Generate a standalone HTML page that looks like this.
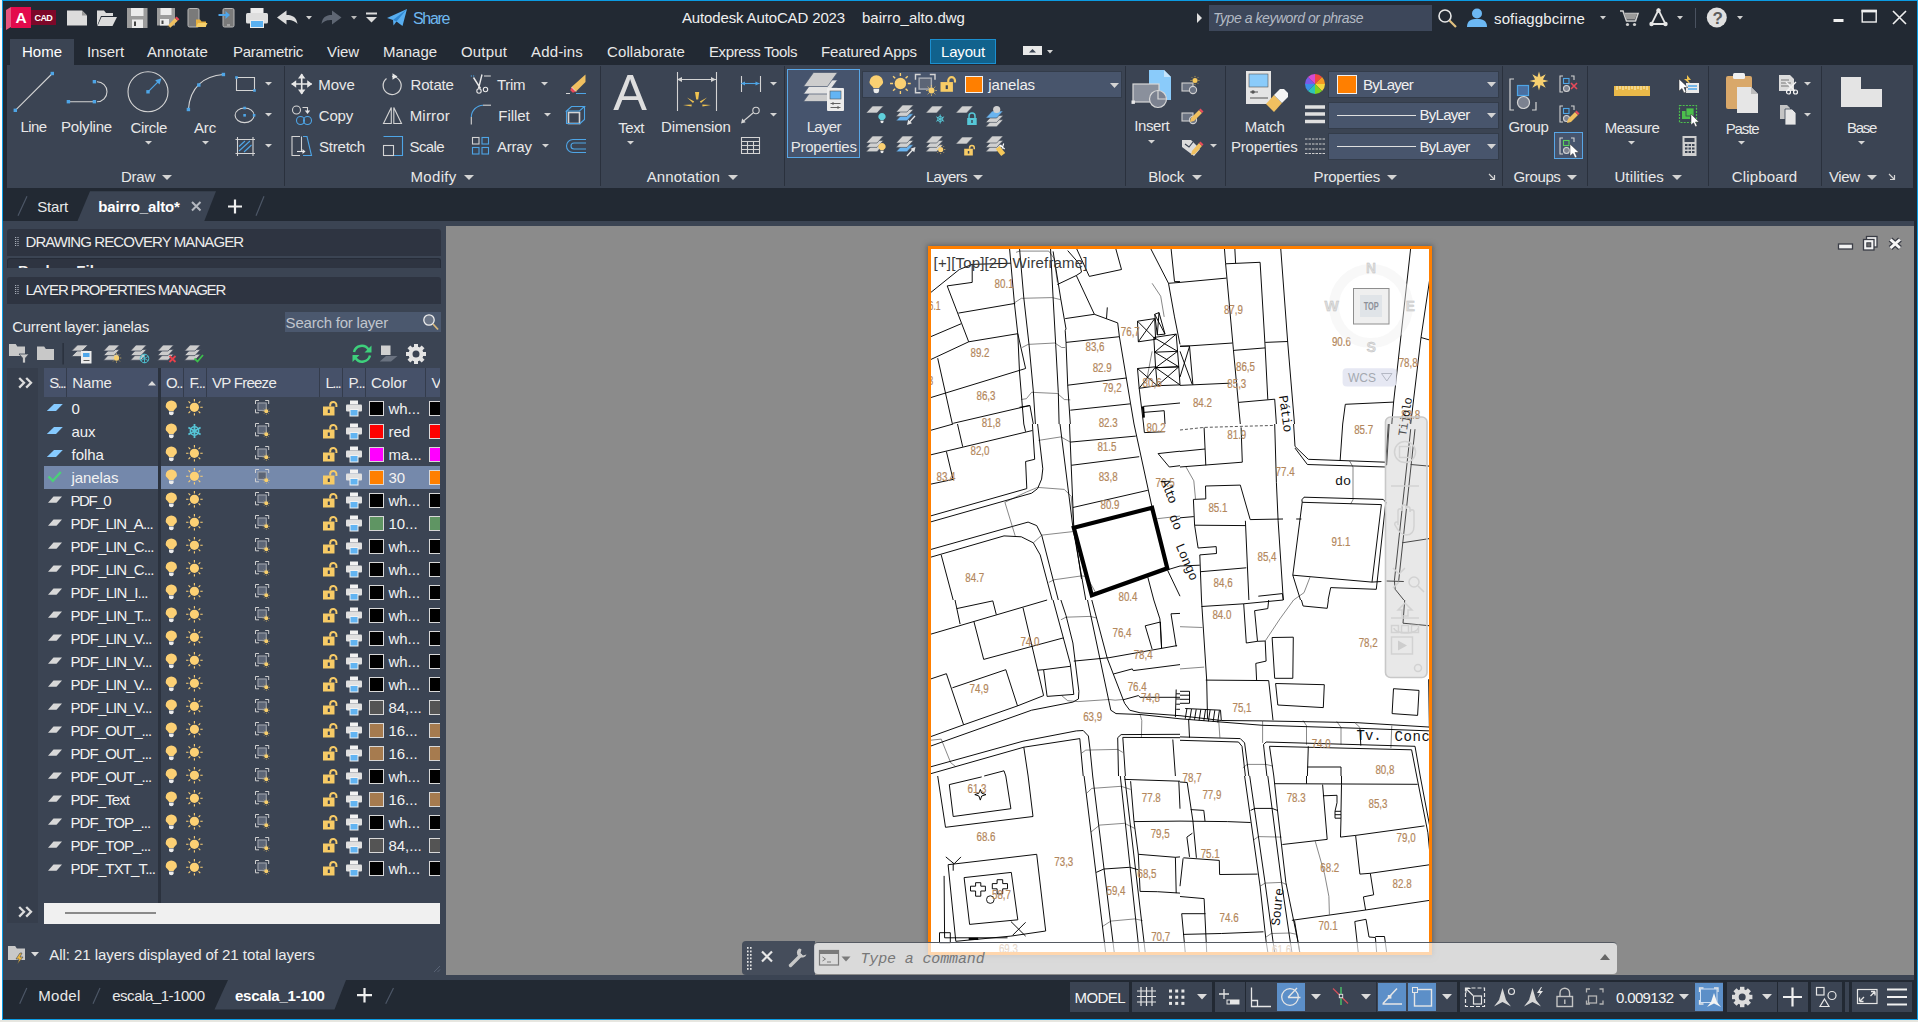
<!DOCTYPE html>
<html><head><meta charset="utf-8"><title>Autodesk AutoCAD 2023 - bairro_alto.dwg</title>
<style>html,body{margin:0;padding:0}body{width:1919px;height:1022px;overflow:hidden;background:#fff;font-family:"Liberation Sans",sans-serif;position:relative}
body>div,body>span,body>svg{position:absolute}
.t{white-space:pre;line-height:normal}
svg{overflow:visible}
#map{overflow:hidden}</style></head><body>
<div style="left:0px;top:0px;width:2px;height:28px;background:#f3f3f3;"></div>
<div style="left:0px;top:28px;width:2px;height:994px;background:#ffffff;"></div>
<div style="left:0px;top:1020px;width:1919px;height:2px;background:#e6e6e0;"></div>
<div style="left:1918px;top:0px;width:1px;height:1022px;background:#fff;"></div>
<div style="left:2px;top:0px;width:1916px;height:1020px;background:#222933;box-sizing:border-box;border:1px solid #0b9be3"></div>
<svg style="left:6px;top:7px;" width="36" height="20" viewBox="0 0 36 20"><path d="M0 3L5 0V20L0 23Z" fill="#e8557f"/><rect x="5" y="0" width="20" height="21" fill="#e30b4c"/><rect x="25" y="3" width="25" height="15" fill="#7d0829"/></svg>
<span class="t" style="left:15.4px;top:9px;font-size:15.5px;color:#fff;font-weight:bold;">A</span>
<span class="t" style="left:34.6px;top:13px;font-size:9px;color:#fff;letter-spacing:-0.633px;font-weight:bold;">CAD</span>
<span class="t" style="left:413.0px;top:10px;font-size:16px;color:#6fb8f0;letter-spacing:-1.344px;">Share</span>
<span class="t" style="left:682.0px;top:9px;font-size:15px;color:#f0f0f0;letter-spacing:-0.141px;">Autodesk AutoCAD 2023</span>
<span class="t" style="left:862.0px;top:9px;font-size:15px;color:#f0f0f0;letter-spacing:0.028px;">bairro_alto.dwg</span>
<div style="left:1209px;top:5px;width:223px;height:26px;background:#3d475a;"></div>
<span class="t" style="left:1213.0px;top:10px;font-size:14px;color:#b4bac4;letter-spacing:-0.448px;font-style:italic;">Type a keyword or phrase</span>
<svg style="left:1197px;top:13px;" width="5" height="10" viewBox="0 0 5 10"><path d="M0 0L5 5L0 10Z" fill="#e0e0e0"/></svg>
<span class="t" style="left:1494.0px;top:10px;font-size:15px;color:#f0f0f0;letter-spacing:0.136px;">sofiaggbcirne</span>
<svg style="left:60px;top:0px;" width="400" height="36" viewBox="0 0 400 36"><path d="M7 10.5H22L27 15.5V25.5H7Z" fill="#dcdcdc"/><path d="M22 10.5V15.5H27Z" fill="#9a9a9a"/><path d="M37 26V10.5H44L46 13H53V16H41L37 26Z" fill="#dcdcdc"/><path d="M41.5 17H57L52.5 26H37.5Z" fill="#dcdcdc"/><rect x="67" y="8" width="20.5" height="20" fill="#9c9c9c"/><rect x="71" y="8" width="12.5" height="8" fill="#ececec"/><rect x="72" y="19.5" width="11" height="8.5" fill="#ececec"/><rect x="74" y="21.5" width="2" height="4.5" fill="#444"/><rect x="97" y="8" width="18" height="17.5" fill="#9c9c9c"/><rect x="100.5" y="8" width="11" height="7" fill="#ececec"/><rect x="100" y="19" width="9" height="6.5" fill="#ececec"/><rect x="101.5" y="20.5" width="2" height="3.5" fill="#444"/><path d="M108 25.5l7-7.5l2.8 2.8l-7.5 7z" fill="#f0c060"/><path d="M115 18l1.6-1.6l2.8 2.8l-1.6 1.6z" fill="#e84a5a"/><path d="M107 28.3l1-2.8l1.8 1.8z" fill="#444"/><rect x="128" y="8.5" width="11" height="18.5" rx="1.5" fill="#7a7a7a" stroke="#b8b8b8" stroke-width="1"/><path d="M136 27V19.5H140L141.5 21.5H146V27Z" fill="#e6b040"/><path d="M138 23H147.5L145.5 27H136Z" fill="#f5cf6a"/><rect x="163" y="8.5" width="11" height="18.5" rx="1.5" fill="#7a7a7a" stroke="#b8b8b8" stroke-width="1"/><path d="M158.5 15h8.5" stroke="#4fa6ea" stroke-width="2"/><path d="M165.5 11l4.5 4l-4.5 4z" fill="#4fa6ea"/><rect x="167" y="24.5" width="3" height="1" fill="#ccc"/><rect x="190.5" y="8" width="13" height="6" fill="#ececec"/><rect x="186" y="13" width="22" height="10.5" rx="1.5" fill="#dedede"/><rect x="190.5" y="20.5" width="13" height="7" fill="#5ab0f0" stroke="#ececec" stroke-width="1"/><path d="M217 17.5L226.5 10.5V15C233 15 236.5 17.5 237.5 24C234.5 20.5 231 20 226.5 20V24.5Z" fill="#dcdcdc"/><path d="M281.5 17.5L272 10.5V15C265.5 15 262.5 17.5 261.5 24C264.5 20.5 267.5 20 272 20V24.5Z" fill="#5e6673"/><rect x="306" y="12.5" width="11" height="2" fill="#dcdcdc"/><path d="M306 17H317L311.5 22.5Z" fill="#dcdcdc"/><path d="M327 18L347 9L342.5 26L336.5 21.5L333.5 25.5L333 20Z" fill="#58aef0"/><path d="M333 20L347 9L336.5 21.5" fill="#2f86d0"/></svg>
<svg style="left:306.0px;top:15.5px;" width="6" height="3.5" viewBox="0 0 6 3.5"><path d="M0 0H6L3.0 3.5Z" fill="#d0d0d0"/></svg>
<svg style="left:351.0px;top:15.5px;" width="6" height="3.5" viewBox="0 0 6 3.5"><path d="M0 0H6L3.0 3.5Z" fill="#b8b8b8"/></svg>
<svg style="left:1430px;top:0px;" width="480" height="36" viewBox="0 0 480 36"><circle cx="15" cy="16" r="6" fill="none" stroke="#e6e6e6" stroke-width="1.6"/><path d="M19.5 20.5L26 27" stroke="#e0c080" stroke-width="2.2"/><circle cx="47" cy="13.5" r="5" fill="#6cb8f4"/><path d="M37 27C37 20.5 41.5 19 47 19S57 20.5 57 27Z" fill="#6cb8f4"/><path d="M190 11h3l3.5 10h9l2.5-7.5h-13" fill="none" stroke="#cfcfcf" stroke-width="1.6"/><circle cx="197.5" cy="24.5" r="1.6" fill="#cfcfcf"/><circle cx="204.500" cy="24.5" r="1.6" fill="#cfcfcf"/><path d="M194 13.5h13l-2 6h-8.500z" fill="#9a9a9a"/><path d="M228.500 10L221.5 24H235.500Z" fill="none" stroke="#e6e6e6" stroke-width="1.8"/><circle cx="228.500" cy="10.5" r="2.2" fill="#e6e6e6"/><circle cx="221.5" cy="24" r="2.200" fill="#e6e6e6"/><circle cx="235.500" cy="24" r="2.200" fill="#e6e6e6"/><rect x="265" y="8" width="1" height="20" fill="#4a5260"/><circle cx="286.800" cy="17.5" r="10" fill="#e0e0e0"/><rect x="403.500" y="19" width="10" height="3" fill="#f0f0f0"/><rect x="432.200" y="10.500" width="14" height="11.500" fill="none" stroke="#f0f0f0" stroke-width="1.4"/><rect x="431.500" y="9.800" width="15.400" height="2.600" fill="#f0f0f0"/><path d="M463 11L476 24M476 11L463 24" stroke="#f0f0f0" stroke-width="1.6"/></svg>
<span class="t" style="left:1712.5px;top:9px;font-size:17px;color:#5c5c5c;font-weight:bold;">?</span>
<svg style="left:1599.8px;top:15.5px;" width="6" height="3.5" viewBox="0 0 6 3.5"><path d="M0 0H6L3.0 3.5Z" fill="#d0d0d0"/></svg>
<svg style="left:1676.5px;top:15.5px;" width="6" height="3.5" viewBox="0 0 6 3.5"><path d="M0 0H6L3.0 3.5Z" fill="#d0d0d0"/></svg>
<svg style="left:1736.5px;top:15.5px;" width="6" height="3.5" viewBox="0 0 6 3.5"><path d="M0 0H6L3.0 3.5Z" fill="#d0d0d0"/></svg>
<div style="left:10px;top:39px;width:64px;height:26px;background:#3b4453;"></div>
<span class="t" style="left:22.0px;top:43px;font-size:15px;color:#fff;letter-spacing:-0.004px;">Home</span>
<span class="t" style="left:87.0px;top:43px;font-size:15px;color:#e8e8e8;letter-spacing:-0.089px;">Insert</span>
<span class="t" style="left:147.0px;top:43px;font-size:15px;color:#e8e8e8;letter-spacing:0.117px;">Annotate</span>
<span class="t" style="left:233.0px;top:43px;font-size:15px;color:#e8e8e8;letter-spacing:-0.253px;">Parametric</span>
<span class="t" style="left:327.0px;top:43px;font-size:15px;color:#e8e8e8;letter-spacing:-0.059px;">View</span>
<span class="t" style="left:383.0px;top:43px;font-size:15px;color:#e8e8e8;letter-spacing:-0.036px;">Manage</span>
<span class="t" style="left:461.0px;top:43px;font-size:15px;color:#e8e8e8;letter-spacing:0.159px;">Output</span>
<span class="t" style="left:531.0px;top:43px;font-size:15px;color:#e8e8e8;letter-spacing:0.163px;">Add-ins</span>
<span class="t" style="left:607.0px;top:43px;font-size:15px;color:#e8e8e8;letter-spacing:0.116px;">Collaborate</span>
<span class="t" style="left:709.0px;top:43px;font-size:15px;color:#e8e8e8;letter-spacing:-0.393px;">Express Tools</span>
<span class="t" style="left:821.0px;top:43px;font-size:15px;color:#e8e8e8;letter-spacing:-0.121px;">Featured Apps</span>
<div style="left:930px;top:39px;width:66px;height:25px;background:#11628d;box-sizing:border-box;border:1px solid #1b8fd0"></div>
<span class="t" style="left:941.0px;top:43px;font-size:15px;color:#fff;letter-spacing:-0.174px;">Layout</span>
<svg style="left:1023px;top:46px;" width="20" height="10" viewBox="0 0 20 10"><rect width="19" height="9" fill="#e8e8e8"/><path d="M6 6.5L9.5 3L13 6.5Z" fill="#3b4453"/></svg>
<svg style="left:1046.5px;top:50px;" width="6" height="3.5" viewBox="0 0 6 3.5"><path d="M0 0H6L3.0 3.5Z" fill="#d4d4d4"/></svg>
<div style="left:7px;top:65px;width:1906px;height:123px;background:#3b4453;"></div>
<div style="left:284px;top:66px;width:1px;height:120px;background:#2a313d;"></div>
<div style="left:600px;top:66px;width:1px;height:120px;background:#2a313d;"></div>
<div style="left:784px;top:66px;width:1px;height:120px;background:#2a313d;"></div>
<div style="left:1125px;top:66px;width:1px;height:120px;background:#2a313d;"></div>
<div style="left:1225px;top:66px;width:1px;height:120px;background:#2a313d;"></div>
<div style="left:1502px;top:66px;width:1px;height:120px;background:#2a313d;"></div>
<div style="left:1587px;top:66px;width:1px;height:120px;background:#2a313d;"></div>
<div style="left:1708px;top:66px;width:1px;height:120px;background:#2a313d;"></div>
<div style="left:1821px;top:66px;width:1px;height:120px;background:#2a313d;"></div>
<svg style="left:0px;top:65px;" width="284" height="100" viewBox="0 0 284 100"><g fill="none" stroke="#d4d4d4" stroke-width="1.1"><path d="M15.3 45.3L52.3 8.5"/><path d="M68.4 36.7H94.4M97 16.7A10 10 0 0 1 97 36.7"/><circle cx="148" cy="26.8" r="20"/><path d="M188.4 44.5C190 22 204 11 223.4 9.5"/><path d="M236.500 12.500H254.500V25.500H236.500Z"/><ellipse cx="244.6" cy="50.3" rx="9.5" ry="7.3"/><path d="M237.5 72V91M253 72V91M235.5 74.5H255M235.5 88.5H255"/></g><path d="M148 26.8L159 15.8" stroke="#4ea5e6" stroke-width="1.2"/><path d="M161.5 13.2L155.2 15.2L159.5 19.5Z" fill="#4ea5e6"/><path d="M239 86L250 76M239 81.5L245 76M244 87L251.5 80" stroke="#4ea5e6" stroke-width="1.1"/><rect x="13.6" y="43.6" width="3.4" height="3.4" fill="#4ea5e6"/><rect x="50.6" y="6.8" width="3.4" height="3.4" fill="#4ea5e6"/><rect x="66.7" y="35.0" width="3.4" height="3.4" fill="#4ea5e6"/><rect x="92.7" y="35.0" width="3.4" height="3.4" fill="#4ea5e6"/><rect x="92.7" y="15.0" width="3.4" height="3.4" fill="#4ea5e6"/><rect x="146.3" y="25.1" width="3.4" height="3.4" fill="#4ea5e6"/><rect x="186.7" y="42.8" width="3.4" height="3.4" fill="#4ea5e6"/><rect x="197.1" y="18.3" width="3.4" height="3.4" fill="#4ea5e6"/><rect x="221.7" y="7.8" width="3.4" height="3.4" fill="#4ea5e6"/><rect x="235.2" y="11.2" width="2.6" height="2.6" fill="#4ea5e6"/><rect x="253.2" y="24.2" width="2.6" height="2.6" fill="#4ea5e6"/><rect x="243.3" y="41.7" width="2.6" height="2.6" fill="#4ea5e6"/><rect x="243.3" y="49.0" width="2.6" height="2.6" fill="#4ea5e6"/><rect x="252.8" y="49.0" width="2.6" height="2.6" fill="#4ea5e6"/></svg>
<span class="t" style="left:20.4px;top:118px;font-size:15px;color:#e8e8e8;letter-spacing:-0.515px;">Line</span>
<span class="t" style="left:61.0px;top:118px;font-size:15px;color:#e8e8e8;letter-spacing:-0.189px;">Polyline</span>
<span class="t" style="left:130.4px;top:119px;font-size:15px;color:#e8e8e8;letter-spacing:-0.288px;">Circle</span>
<span class="t" style="left:194.0px;top:119px;font-size:15px;color:#e8e8e8;letter-spacing:-0.167px;">Arc</span>
<svg style="left:144.5px;top:141px;" width="7" height="3.5" viewBox="0 0 7 3.5"><path d="M0 0H7L3.5 3.5Z" fill="#d4d4d4"/></svg>
<svg style="left:201.5px;top:141px;" width="7" height="3.5" viewBox="0 0 7 3.5"><path d="M0 0H7L3.5 3.5Z" fill="#d4d4d4"/></svg>
<svg style="left:264.5px;top:82px;" width="7" height="3.5" viewBox="0 0 7 3.5"><path d="M0 0H7L3.5 3.5Z" fill="#d4d4d4"/></svg>
<svg style="left:264.5px;top:113px;" width="7" height="3.5" viewBox="0 0 7 3.5"><path d="M0 0H7L3.5 3.5Z" fill="#d4d4d4"/></svg>
<svg style="left:264.5px;top:144px;" width="7" height="3.5" viewBox="0 0 7 3.5"><path d="M0 0H7L3.5 3.5Z" fill="#d4d4d4"/></svg>
<span class="t" style="left:121.0px;top:168px;font-size:15px;color:#e8e8e8;letter-spacing:-0.250px;">Draw</span>
<svg style="left:162.0px;top:175px;" width="10" height="5" viewBox="0 0 10 5"><path d="M0 0H10L5.0 5Z" fill="#d4d4d4"/></svg>
<svg style="left:280px;top:60px;" width="320" height="100" viewBox="0 0 320 100"><path d="M21.7 14v20M11.7 24h20" stroke="#e8e8e8" stroke-width="1.6" fill="none"/><path d="M21.7 13.5l-3.7 5h7.4zM21.7 34.5l-3.7-5h7.4zM11.2 24l5-3.7v7.4zM32.2 24l-5-3.7v7.4z" fill="#e8e8e8"/><g fill="none" stroke-width="1.1"><circle cx="16.5" cy="50" r="4" stroke="#d4d4d4"/><circle cx="20.5" cy="60.5" r="4" stroke="#4ea5e6"/><circle cx="27.5" cy="60.5" r="4" stroke="#4ea5e6"/><path d="M22.5 47.5h5v3.5" stroke="#d4d4d4"/></g><path d="M24.8 50.5h5.4l-2.7 3.5z" fill="#e8e8e8"/><g fill="none" stroke-width="1.1"><path d="M20 76.5H12V95.5H20" stroke="#d4d4d4"/><path d="M21.5 76.5V92" stroke="#d4d4d4"/><path d="M23 76.5H27L31.5 95.5H23" stroke="#4ea5e6"/><path d="M17 91.5h6" stroke="#e8e8e8"/></g><path d="M22.5 89l3 2.5l-3 2.5z" fill="#e8e8e8"/><path d="M112 16.5A9 9 0 1 1 106.5 18.5" fill="none" stroke="#d4d4d4" stroke-width="1.2"/><path d="M112.5 13.2l5 3.4l-5 3.2z" fill="#e8e8e8"/><g fill="none" stroke-width="1.1"><path d="M111.3 47.5V63.5H103.5Z" stroke="#d4d4d4"/><path d="M113.8 47.5V63.5H121.5Z" stroke="#d4d4d4"/></g><g fill="none" stroke-width="1.1"><path d="M103.5 76.5H122.5V95.5H114" stroke="#4ea5e6"/><rect x="103.5" y="85.5" width="10" height="10" stroke="#d4d4d4"/></g><g fill="none" stroke-width="1.1"><path d="M190.8 16h4.5" stroke="#4ea5e6" stroke-dasharray="1.2 1"/><path d="M204 16h6.8" stroke="#d4d4d4"/><path d="M193.5 17.5l7 11M202 14.5l-3.5 14" stroke="#e8e8e8" stroke-width="1.4"/><circle cx="199" cy="31" r="2.2" stroke="#e8e8e8"/><circle cx="205.5" cy="29.5" r="2.2" stroke="#e8e8e8"/></g><path d="M191.3 64.5V57" fill="none" stroke="#d4d4d4" stroke-width="1.1"/><path d="M191.3 57A12 12 0 0 1 203 45.2" fill="none" stroke="#4ea5e6" stroke-width="1.1"/><path d="M203 45.2H211" fill="none" stroke="#d4d4d4" stroke-width="1.1"/><g fill="none" stroke-width="1.1"><rect x="192.5" y="77.5" width="6.5" height="6.5" stroke="#d4d4d4"/><rect x="202" y="77.5" width="6.5" height="6.5" stroke="#4ea5e6"/><rect x="192.5" y="87.5" width="6.5" height="6.5" stroke="#4ea5e6"/><rect x="202" y="87.5" width="6.5" height="6.5" stroke="#4ea5e6"/></g><path d="M305.5 14.5V22L296 31.5L291.5 27Z" fill="#f0c060"/><path d="M296 31.5l-3.2 1.2l-2.5-2.5l1.2-3.2z" fill="#e84a5a"/><path d="M291.5 27l4.5 4.5" stroke="#fff" stroke-width="0.8"/><path d="M286 33.5h4" stroke="#d4d4d4" stroke-width="1"/><path d="M296 33.5h10" stroke="#4ea5e6" stroke-width="1"/><g fill="none" stroke-width="1.1"><rect x="288.5" y="52.5" width="11" height="11" stroke="#d4d4d4" stroke-width="1.6"/><path d="M286.5 51l5-4.5h13l-5 4.5zM304.5 46.5v13l-5 4.5" stroke="#4ea5e6"/><path d="M286.5 51v12.5h13" stroke="#4ea5e6"/></g><g fill="none" stroke="#4ea5e6" stroke-width="1.1"><path d="M306 79.5H293A6.5 6.5 0 0 0 293 92.5H306"/><path d="M306 83H294A3 3 0 0 0 294 89H306"/></g></svg>
<span class="t" style="left:318.3px;top:76px;font-size:15px;color:#e8e8e8;letter-spacing:-0.072px;">Move</span>
<span class="t" style="left:318.8px;top:107px;font-size:15px;color:#e8e8e8;letter-spacing:-0.204px;">Copy</span>
<span class="t" style="left:319.0px;top:138px;font-size:15px;color:#e8e8e8;letter-spacing:-0.219px;">Stretch</span>
<span class="t" style="left:410.5px;top:76px;font-size:15px;color:#e8e8e8;letter-spacing:-0.151px;">Rotate</span>
<span class="t" style="left:409.7px;top:107px;font-size:15px;color:#e8e8e8;letter-spacing:0.188px;">Mirror</span>
<span class="t" style="left:409.5px;top:138px;font-size:15px;color:#e8e8e8;letter-spacing:-0.603px;">Scale</span>
<span class="t" style="left:497.0px;top:76px;font-size:15px;color:#e8e8e8;letter-spacing:-0.280px;">Trim</span>
<span class="t" style="left:498.3px;top:107px;font-size:15px;color:#e8e8e8;letter-spacing:-0.076px;">Fillet</span>
<span class="t" style="left:497.0px;top:138px;font-size:15px;color:#e8e8e8;letter-spacing:-0.229px;">Array</span>
<svg style="left:540.5px;top:82px;" width="7" height="3.5" viewBox="0 0 7 3.5"><path d="M0 0H7L3.5 3.5Z" fill="#d4d4d4"/></svg>
<svg style="left:544.3px;top:113px;" width="7" height="3.5" viewBox="0 0 7 3.5"><path d="M0 0H7L3.5 3.5Z" fill="#d4d4d4"/></svg>
<svg style="left:542.3px;top:144px;" width="7" height="3.5" viewBox="0 0 7 3.5"><path d="M0 0H7L3.5 3.5Z" fill="#d4d4d4"/></svg>
<span class="t" style="left:410.5px;top:168px;font-size:15px;color:#e8e8e8;letter-spacing:0.335px;">Modify</span>
<svg style="left:464.0px;top:175px;" width="10" height="5" viewBox="0 0 10 5"><path d="M0 0H10L5.0 5Z" fill="#d4d4d4"/></svg>
<span class="t" style="left:613.2px;top:63px;font-size:50.5px;color:#dedede;">A</span>
<span class="t" style="left:618.3px;top:119px;font-size:15px;color:#e8e8e8;letter-spacing:-0.454px;">Text</span>
<svg style="left:626.5px;top:141px;" width="7" height="3.5" viewBox="0 0 7 3.5"><path d="M0 0H7L3.5 3.5Z" fill="#d4d4d4"/></svg>
<svg style="left:676px;top:71px;" width="42" height="42" viewBox="0 0 42 42"><g fill="none" stroke="#d4d4d4" stroke-width="1.1"><path d="M1.500 1V40M40.500 1V40M1.500 8.500H40.500"/></g><path d="M1 8.5l5-2.5v5zM40 8.5l-5-2.5v5z" fill="#d4d4d4"/><path d="M19 21l1.2 7.5h2L23.2 21zM11 26.5l6 5.5l1.2-1.4zM31 26.5l-6 5.5l-1.2-1.4zM7 34l8.5 1.5l0.2-2zM35 34l-8.5 1.5l-0.2-2z" fill="#f0c350"/></svg>
<span class="t" style="left:661.0px;top:118px;font-size:15px;color:#e8e8e8;letter-spacing:-0.129px;">Dimension</span>
<svg style="left:740px;top:74px;" width="22" height="82" viewBox="0 0 22 82"><g fill="none" stroke-width="1.1"><path d="M1.500 2V18M20.500 2V18" stroke="#d4d4d4"/><path d="M1 9.5H19.5" stroke="#4ea5e6"/><path d="M1 9.5l4-2v4zM19.5 9.5l-4-2v4z" fill="#4ea5e6" stroke="none"/><circle cx="16" cy="36.5" r="3.2" stroke="#d4d4d4"/><path d="M13 39L3 47.5" stroke="#d4d4d4"/><path d="M1 49.5l1.2-5l3.5 3.8z" fill="#d4d4d4" stroke="none"/><path d="M1.5 63.5H19.5V79.5H1.5ZM1.5 67.5H19.5M1.5 71.5H19.5M1.5 75.5H19.5M7.5 67.5V79.5M13.5 67.5V79.5" stroke="#d4d4d4"/></g></svg>
<svg style="left:769.5px;top:82px;" width="7" height="3.5" viewBox="0 0 7 3.5"><path d="M0 0H7L3.5 3.5Z" fill="#d4d4d4"/></svg>
<svg style="left:769.5px;top:113px;" width="7" height="3.5" viewBox="0 0 7 3.5"><path d="M0 0H7L3.5 3.5Z" fill="#d4d4d4"/></svg>
<span class="t" style="left:646.7px;top:168px;font-size:15px;color:#e8e8e8;letter-spacing:0.157px;">Annotation</span>
<svg style="left:727.7px;top:175px;" width="10" height="5" viewBox="0 0 10 5"><path d="M0 0H10L5.0 5Z" fill="#d4d4d4"/></svg>
<div style="left:787px;top:69px;width:73px;height:89px;background:#46546d;box-sizing:border-box;border:1px solid #58a6e6"></div>
<svg style="left:803px;top:71px;" width="44" height="42" viewBox="0 0 44 42"><path d="M10.5 16.5h24.0l-10.0 14.0h-24.0z" fill="#cdcdcd" stroke="#46546d" stroke-width="0.7"/><path d="M10.5 9.0h24.0l-10.0 14.0h-24.0z" fill="#e2e2e2" stroke="#46546d" stroke-width="0.7"/><path d="M10.5 1.5h24.0l-10.0 14.0h-24.0z" fill="#cdcdcd" stroke="#46546d" stroke-width="0.7"/><rect x="24" y="17" width="17" height="23" rx="1" fill="#ececec"/><rect x="27" y="20" width="11" height="8" fill="#62b4f4" stroke="#555" stroke-width="0.6"/><path d="M27.500 32.500h10M27.500 36.500h10" stroke="#555" stroke-width="0.9"/><path d="M30 31v3M35 35v3" stroke="#555" stroke-width="0.9"/></svg>
<span class="t" style="left:806.7px;top:118px;font-size:15px;color:#e8e8e8;letter-spacing:-0.706px;">Layer</span>
<span class="t" style="left:790.7px;top:138px;font-size:15px;color:#e8e8e8;letter-spacing:-0.237px;">Properties</span>
<div style="left:862px;top:71px;width:260px;height:27px;background:#48556c;box-sizing:border-box;border:1px solid #333c4a"></div>
<svg style="left:862px;top:71px;" width="260" height="27" viewBox="0 0 260 27"><path d="M7.47 10.97a6.83 6.83 0 1 1 13.66 0c0 3.17 -3.90 4.15 -3.90 6.10h-5.86c0 -1.95 -3.90 -2.93 -3.90 -6.10z" fill="#fad072"/><path d="M11.49 17.68h5.61v2.20a2.81 2.44 0 0 1 -5.61 0z" fill="#ececec"/><circle cx="38.4" cy="12.5" r="5.75" fill="#fad072"/><path d="M45.77 12.50L48.77 12.50M43.61 17.71L45.74 19.84M38.40 19.88L38.40 22.88M33.19 17.71L31.06 19.84M31.02 12.50L28.02 12.50M33.19 7.29L31.06 5.16M38.40 5.12L38.40 2.12M43.61 7.29L45.74 5.16" stroke="#fad072" stroke-width="1.38" fill="none"/><g fill="none" stroke="#d4d4d4" stroke-width="1.43"><path d="M53.5 8.7V3.5H58.7M67.8 3.5H73.0V8.7M53.5 16.5V21.7H58.7"/><rect x="57.14" y="7.14" width="12.22" height="10.920000000000002" fill="#5c6576" stroke="#a8acb4"/></g><circle cx="69.49000000000001" cy="19.490000000000002" r="2.99" fill="#f8cf6c"/><path d="M73.33 19.49L74.89 19.49M72.20 22.20L73.30 23.30M69.49 23.33L69.49 24.89M66.78 22.20L65.68 23.30M65.66 19.49L64.10 19.49M66.78 16.78L65.68 15.68M69.49 15.66L69.49 14.10M72.20 16.78L73.30 15.68" stroke="#f8cf6c" stroke-width="0.72" fill="none"/><rect x="78.5" y="11.06" width="12.420000000000002" height="9.72" fill="#f8cc66"/><path d="M86.276 11.06V9.548A3.3480000000000003 3.3480000000000003 0 0 1 92.97200000000001 9.548V11.600000000000001" fill="none" stroke="#f8cc66" stroke-width="2.16"/><rect x="83.684" y="14.3" width="2.16" height="3.7800000000000002" fill="#3b4453"/><rect x="103.5" y="5.5" width="17" height="16" fill="#ff7f00" stroke="#f0f0f0" stroke-width="1"/></svg>
<span class="t" style="left:988.3px;top:76px;font-size:15px;color:#f0f0f0;letter-spacing:-0.119px;">janelas</span>
<svg style="left:1109.8px;top:82.5px;" width="9" height="5" viewBox="0 0 9 5"><path d="M0 0H9L4.5 5Z" fill="#d4d4d4"/></svg>
<svg style="left:862px;top:71px;" width="260" height="90" viewBox="0 0 260 90"><path d="M10.5 35h11l-6.5 7h-11z" fill="#d0d0d0" stroke="#3b4453" stroke-width="0.6"/><path d="M16.30 46.01a3.70 3.70 0 1 1 7.39 0c0 1.72 -2.11 2.24 -2.11 3.30h-3.17c0 -1.06 -2.11 -1.58 -2.11 -3.30z" fill="#5fd0dc"/><path d="M18.48 49.64h3.04v1.19a1.52 1.32 0 0 1 -3.04 0z" fill="#ececec"/><path d="M40.5 42.8h11l-6.5 7h-11z" fill="#6ab4f0" stroke="#3b4453" stroke-width="0.6"/><path d="M40.5 38.4h11l-6.5 7h-11z" fill="#d0d0d0" stroke="#3b4453" stroke-width="0.6"/><path d="M40.5 34h11l-6.5 7h-11z" fill="#d0d0d0" stroke="#3b4453" stroke-width="0.6"/><path d="M53 45l-5.500 6" stroke="#e4e4e4" stroke-width="1.300"/><path d="M45 54l1.200-5.200l3.800 3.400z" fill="#e4e4e4"/><path d="M70.20000000000005 35h11l-6.5 7h-11z" fill="#d0d0d0" stroke="#3b4453" stroke-width="0.6"/><path d="M78.20000000000005 43.5v9M74.30000000000004 45.8l7.800 4.500M82.10000000000005 45.8l-7.800 4.500" stroke="#56c8d8" stroke-width="1"/><circle cx="78.20000000000005" cy="48" r="2.600" fill="none" stroke="#56c8d8" stroke-width="0.900"/><path d="M100.20000000000005 35h11l-6.5 7h-11z" fill="#d0d0d0" stroke="#3b4453" stroke-width="0.6"/><rect x="105.20000000000005" y="47" width="9.500" height="7" fill="#56c8d8"/><path d="M107.00000000000004 47v-2a3 3 0 0 1 6 0v2" fill="none" stroke="#56c8d8" stroke-width="1.500"/><rect x="109.30000000000004" y="49" width="1.400" height="3" fill="#3b4453"/><path d="M130.20000000000005 48.8h11l-6.5 7h-11z" fill="#d0d0d0" stroke="#3b4453" stroke-width="0.6"/><path d="M130.20000000000005 44.4h11l-6.5 7h-11z" fill="#d0d0d0" stroke="#3b4453" stroke-width="0.6"/><path d="M130.20000000000005 40h11l-6.5 7h-11z" fill="#6ab4f0" stroke="#3b4453" stroke-width="0.6"/><circle cx="134.70000000000005" cy="38.5" r="3.600" fill="#d0d0d0"/><path d="M10.5 73.8h11l-6.5 7h-11z" fill="#d0d0d0" stroke="#3b4453" stroke-width="0.6"/><path d="M10.5 69.4h11l-6.5 7h-11z" fill="#d0d0d0" stroke="#3b4453" stroke-width="0.6"/><path d="M10.5 65h11l-6.5 7h-11z" fill="#d0d0d0" stroke="#3b4453" stroke-width="0.6"/><path d="M16.30 76.01a3.70 3.70 0 1 1 7.39 0c0 1.72 -2.11 2.24 -2.11 3.30h-3.17c0 -1.06 -2.11 -1.58 -2.11 -3.30z" fill="#fad072"/><path d="M18.48 79.64h3.04v1.19a1.52 1.32 0 0 1 -3.04 0z" fill="#ececec"/><path d="M40.5 73.8h11l-6.5 7h-11z" fill="#6ab4f0" stroke="#3b4453" stroke-width="0.6"/><path d="M40.5 69.4h11l-6.5 7h-11z" fill="#d0d0d0" stroke="#3b4453" stroke-width="0.6"/><path d="M40.5 65h11l-6.5 7h-11z" fill="#d0d0d0" stroke="#3b4453" stroke-width="0.6"/><path d="M45 85l6-6.500" stroke="#e4e4e4" stroke-width="1.300"/><path d="M53.5 76l-1.200 5.200l-3.800-3.400z" fill="#e4e4e4"/><path d="M70.20000000000005 73.8h11l-6.5 7h-11z" fill="#d0d0d0" stroke="#3b4453" stroke-width="0.6"/><path d="M70.20000000000005 69.4h11l-6.5 7h-11z" fill="#d0d0d0" stroke="#3b4453" stroke-width="0.6"/><path d="M70.20000000000005 65h11l-6.5 7h-11z" fill="#d0d0d0" stroke="#3b4453" stroke-width="0.6"/><circle cx="78.70000000000005" cy="78.5" r="2.58" fill="#fad072"/><path d="M82.00 78.50L83.35 78.50M81.04 80.84L81.99 81.79M78.70 81.80L78.70 83.15M76.36 80.84L75.41 81.79M75.40 78.50L74.05 78.50M76.36 76.16L75.41 75.21M78.70 75.20L78.70 73.85M81.04 76.16L81.99 75.21" stroke="#fad072" stroke-width="0.62" fill="none"/><path d="M100.20000000000005 66h11l-6.5 7h-11z" fill="#d0d0d0" stroke="#3b4453" stroke-width="0.6"/><rect x="102.20000000000005" y="77.75" width="8.625" height="6.75" fill="#f8cc66"/><path d="M107.60000000000005 77.75V76.7A2.325 2.325 0 0 1 112.25000000000004 76.7V78.125" fill="none" stroke="#f8cc66" stroke-width="1.5"/><rect x="105.80000000000004" y="80.0" width="1.5" height="2.625" fill="#3b4453"/><path d="M130.20000000000005 73.8h11l-6.5 7h-11z" fill="#d0d0d0" stroke="#3b4453" stroke-width="0.6"/><path d="M130.20000000000005 69.4h11l-6.5 7h-11z" fill="#d0d0d0" stroke="#3b4453" stroke-width="0.6"/><path d="M130.20000000000005 65h11l-6.5 7h-11z" fill="#d0d0d0" stroke="#3b4453" stroke-width="0.6"/><path d="M133.70000000000005 78l4-3l5.500 7l-4 3z" fill="#f5c85a"/><path d="M137.70000000000005 74l5 4M141.70000000000005 72.5l-1.500 5" stroke="#fff" stroke-width="1.100"/></svg>
<span class="t" style="left:926.0px;top:168px;font-size:15px;color:#e8e8e8;letter-spacing:-0.722px;">Layers</span>
<svg style="left:973.3px;top:175px;" width="10" height="5" viewBox="0 0 10 5"><path d="M0 0H10L5.0 5Z" fill="#d4d4d4"/></svg>
<svg style="left:1131px;top:70px;" width="42" height="42" viewBox="0 0 42 42"><path d="M18 0H33L40 7V30H18Z" fill="#8acbfa"/><path d="M33 0V7H40Z" fill="#c4e4fc"/><rect x="2" y="14" width="26" height="18" fill="#8a909c" stroke="#d8d8d8" stroke-width="1.2"/><circle cx="27" cy="29" r="8.5" fill="#7c8290" stroke="#d8d8d8" stroke-width="1.2"/><path d="M27 20.5V29H35.5" stroke="#d8d8d8" stroke-width="1.2" fill="none"/><rect x="0.5" y="30.5" width="3.4" height="3.4" fill="#e8e8e8"/></svg>
<span class="t" style="left:1134.3px;top:117px;font-size:15px;color:#e8e8e8;letter-spacing:-0.422px;">Insert</span>
<svg style="left:1148.2px;top:139.5px;" width="7" height="3.5" viewBox="0 0 7 3.5"><path d="M0 0H7L3.5 3.5Z" fill="#d4d4d4"/></svg>
<svg style="left:1181px;top:74px;" width="22" height="84" viewBox="0 0 22 84"><rect x="1" y="9" width="11" height="8" fill="#6b7382" stroke="#cfcfcf" stroke-width="1.1"/><circle cx="12" cy="16" r="3.6" fill="#6b7382" stroke="#cfcfcf" stroke-width="1.1"/><circle cx="14" cy="6.5" r="2.53" fill="#f5c85a"/><path d="M17.25 6.50L18.57 6.50M16.29 8.79L17.23 9.73M14.00 9.75L14.00 11.07M11.71 8.79L10.77 9.73M10.75 6.50L9.43 6.50M11.71 4.21L10.77 3.27M14.00 3.25L14.00 1.93M16.29 4.21L17.23 3.27" stroke="#f5c85a" stroke-width="0.61" fill="none"/><rect x="1" y="39" width="11" height="8" fill="#6b7382" stroke="#cfcfcf" stroke-width="1.1"/><circle cx="12" cy="46" r="3.6" fill="#6b7382" stroke="#cfcfcf" stroke-width="1.1"/><path d="M10 44l8-8l3 3l-8 8l-4 1z" fill="#f0c060"/><path d="M18 36l1.5-1.5l3 3L21 39z" fill="#e84a5a"/><path d="M1 66H10L19 75L13 82L1 73Z" fill="#dcdcdc"/><path d="M11 77l7-8l3 3l-7 8l-4 1z" fill="#f0c060"/><path d="M18 69l1.5-1.5l3 3L21 72z" fill="#e84a5a"/><path d="M4 70l4 3l4-5" stroke="#3b4453" fill="none" stroke-width="1.2"/></svg>
<svg style="left:1209.8px;top:144px;" width="7" height="3.5" viewBox="0 0 7 3.5"><path d="M0 0H7L3.5 3.5Z" fill="#d4d4d4"/></svg>
<span class="t" style="left:1148.3px;top:168px;font-size:15px;color:#e8e8e8;letter-spacing:-0.194px;">Block</span>
<svg style="left:1191.7px;top:175px;" width="10" height="5" viewBox="0 0 10 5"><path d="M0 0H10L5.0 5Z" fill="#d4d4d4"/></svg>
<svg style="left:1245px;top:71px;" width="42" height="42" viewBox="0 0 42 42"><rect x="1" y="0" width="25" height="33" fill="#e4e4e4"/><rect x="4" y="3" width="19" height="13" fill="#8acbfa" stroke="#555" stroke-width="0.6"/><path d="M5 21h8M5 27h18" stroke="#555" stroke-width="1.2"/><circle cx="8" cy="21" r="1.8" fill="#555"/><path d="M21 33l8-9l8 8l-8 9z" fill="#f0c060"/><path d="M29 24l6-6l4 0l4 4l0 4l-6 6z" fill="#f4f4f4"/></svg>
<span class="t" style="left:1244.7px;top:118px;font-size:15px;color:#e8e8e8;letter-spacing:-0.172px;">Match</span>
<span class="t" style="left:1231.0px;top:138px;font-size:15px;color:#e8e8e8;letter-spacing:-0.188px;">Properties</span>
<svg style="left:1305px;top:74px;" width="20" height="20" viewBox="0 0 20 20"><path d="M10 10L10.00 0.00A10 10 0 0 1 17.07 2.93Z" fill="#f0483e"/><path d="M10 10L17.07 2.93A10 10 0 0 1 20.00 10.00Z" fill="#f59a23"/><path d="M10 10L20.00 10.00A10 10 0 0 1 17.07 17.07Z" fill="#f5d63d"/><path d="M10 10L17.07 17.07A10 10 0 0 1 10.00 20.00Z" fill="#7ed321"/><path d="M10 10L10.00 20.00A10 10 0 0 1 2.93 17.07Z" fill="#2ec4b6"/><path d="M10 10L2.93 17.07A10 10 0 0 1 0.00 10.00Z" fill="#3b8fe8"/><path d="M10 10L0.00 10.00A10 10 0 0 1 2.93 2.93Z" fill="#7b5be8"/><path d="M10 10L2.93 2.93A10 10 0 0 1 10.00 0.00Z" fill="#d64bd0"/></svg>
<svg style="left:1305px;top:104px;" width="20" height="52" viewBox="0 0 20 52"><path d="M0 3h20M0 10h20M0 17.5h20" stroke="#e0e0e0" stroke-width="3.6"/><path d="M0 35h20M0 40h20M0 45h20M0 49.5h20" stroke="#cfcfcf" stroke-width="1.2" stroke-dasharray="2.5 1"/></svg>
<div style="left:1328px;top:70.5px;width:171px;height:27px;background:#48556c;box-sizing:border-box;border:1px solid #333c4a"></div>
<svg style="left:1486.5px;top:82.0px;" width="9" height="5" viewBox="0 0 9 5"><path d="M0 0H9L4.5 5Z" fill="#d4d4d4"/></svg>
<div style="left:1328px;top:101.5px;width:171px;height:27px;background:#48556c;box-sizing:border-box;border:1px solid #333c4a"></div>
<svg style="left:1486.5px;top:113.0px;" width="9" height="5" viewBox="0 0 9 5"><path d="M0 0H9L4.5 5Z" fill="#d4d4d4"/></svg>
<div style="left:1328px;top:132.5px;width:171px;height:27px;background:#48556c;box-sizing:border-box;border:1px solid #333c4a"></div>
<svg style="left:1486.5px;top:144.0px;" width="9" height="5" viewBox="0 0 9 5"><path d="M0 0H9L4.5 5Z" fill="#d4d4d4"/></svg>
<div style="left:1337px;top:74.5px;width:20px;height:19px;background:#ff7f00;box-sizing:border-box;border:1px solid #f0f0f0"></div>
<span class="t" style="left:1363.0px;top:76px;font-size:15px;color:#f0f0f0;letter-spacing:-0.719px;">ByLayer</span>
<div style="left:1337px;top:115px;width:79px;height:1px;background:#e0e0e0;"></div>
<span class="t" style="left:1419.5px;top:106px;font-size:15px;color:#f0f0f0;letter-spacing:-0.719px;">ByLayer</span>
<div style="left:1337px;top:146px;width:79px;height:1px;background:#e0e0e0;"></div>
<span class="t" style="left:1419.5px;top:138px;font-size:15px;color:#f0f0f0;letter-spacing:-0.719px;">ByLayer</span>
<span class="t" style="left:1313.6px;top:168px;font-size:15px;color:#e8e8e8;letter-spacing:-0.197px;">Properties</span>
<svg style="left:1386.8px;top:175px;" width="10" height="5" viewBox="0 0 10 5"><path d="M0 0H10L5.0 5Z" fill="#d4d4d4"/></svg>
<svg style="left:1488px;top:173px;" width="8" height="8" viewBox="0 0 8 8"><path d="M1 1L6 6M6.5 2V6.5H2" fill="none" stroke="#d4d4d4" stroke-width="1.2"/></svg>
<svg style="left:1509px;top:72px;" width="42" height="42" viewBox="0 0 42 42"><path d="M5 7H1V38H5M23 38H27V30" fill="none" stroke="#d4d4d4" stroke-width="1.2"/><rect x="8.5" y="13.5" width="11" height="10" fill="#4a6fa0" stroke="#4ea5e6" stroke-width="1.2"/><circle cx="14.5" cy="30.5" r="6" fill="#7c8290" stroke="#d4d4d4" stroke-width="1.2"/><path d="M39.5 9.0L33.9 10.6L36.7 15.7L31.6 12.9L30.0 18.5L28.4 12.9L23.3 15.7L26.1 10.6L20.5 9.0L26.1 7.4L23.3 2.3L28.4 5.1L30.0 -0.5L31.6 5.1L36.7 2.3L33.9 7.4Z" fill="#f7d070"/></svg>
<span class="t" style="left:1508.5px;top:118px;font-size:15px;color:#e8e8e8;letter-spacing:-0.341px;">Group</span>
<div style="left:1553.5px;top:132px;width:29.5px;height:27px;background:#46546d;box-sizing:border-box;border:1px solid #58a6e6"></div>
<svg style="left:1559px;top:74px;" width="22" height="84" viewBox="0 0 22 84"><path d="M4 2H1V18H4M12 2H15V6" fill="none" stroke="#d4d4d4" stroke-width="1.1"/><rect x="4.5" y="4.5" width="5.5" height="5" fill="none" stroke="#4ea5e6" stroke-width="1.1"/><circle cx="7.5" cy="14.5" r="3" fill="#7c8290" stroke="#d4d4d4" stroke-width="1.1"/><path d="M12 9l6 6M18 9l-6 6" stroke="#e84a5a" stroke-width="1.6"/><path d="M4 32H1V48H4M12 32H15V36" fill="none" stroke="#d4d4d4" stroke-width="1.1"/><rect x="4.5" y="34.5" width="5.5" height="5" fill="none" stroke="#4ea5e6" stroke-width="1.1"/><circle cx="7.5" cy="44.5" r="3" fill="#7c8290" stroke="#d4d4d4" stroke-width="1.1"/><path d="M9 45l7-7l3 3l-7 7l-4 1z" fill="#f0c060"/><path d="M16 38l1.5-1.5l3 3L19 41z" fill="#e84a5a"/><path d="M4 64H1V80H4M12 64H15V68" fill="none" stroke="#d4d4d4" stroke-width="1.1"/><rect x="4.5" y="66.5" width="5.5" height="5" fill="none" stroke="#5ad05a" stroke-width="1.1"/><circle cx="7.5" cy="76.5" r="3" fill="#7c8290" stroke="#d4d4d4" stroke-width="1.1"/><path d="M11 70v12l3-2.5l2 4.5l2-1l-2-4.5h4z" fill="#fff" stroke="#333" stroke-width="0.5"/></svg>
<span class="t" style="left:1513.5px;top:168px;font-size:15px;color:#e8e8e8;letter-spacing:-0.367px;">Groups</span>
<svg style="left:1567.0px;top:175px;" width="10" height="5" viewBox="0 0 10 5"><path d="M0 0H10L5.0 5Z" fill="#d4d4d4"/></svg>
<svg style="left:1614px;top:86px;" width="36" height="11" viewBox="0 0 36 11"><rect width="36" height="10" fill="#e9b949"/><path d="M3 0v4M6 0v3M9 0v4M12 0v3M15 0v4M18 0v3M21 0v4M24 0v3M27 0v4M30 0v3M33 0v4" stroke="#fff3c8" stroke-width="1"/></svg>
<span class="t" style="left:1604.8px;top:119px;font-size:15px;color:#e8e8e8;letter-spacing:-0.539px;">Measure</span>
<svg style="left:1628.2px;top:141px;" width="7" height="3.5" viewBox="0 0 7 3.5"><path d="M0 0H7L3.5 3.5Z" fill="#d4d4d4"/></svg>
<svg style="left:1678px;top:74px;" width="22" height="84" viewBox="0 0 22 84"><path d="M9 1l4 5h-3l3 5l-7-6h3z" fill="#f0c350"/><rect x="8" y="9" width="13" height="10" fill="#eaeaea"/><path d="M10 12h9M10 15h9" stroke="#4fa6ea" stroke-width="1.3"/><path d="M1 5v12l3-2.5l2 4.5l2-1l-2-4.5h4z" fill="#fff" stroke="#333" stroke-width="0.5"/><rect x="1.5" y="31.5" width="17" height="17" fill="none" stroke="#4cc04c" stroke-width="1.2" stroke-dasharray="2 1.2"/><rect x="4" y="37" width="8" height="8" fill="#4cc04c"/><rect x="8" y="34" width="8" height="8" fill="#4cc04c" stroke="#3b4453" stroke-width="0.8"/><path d="M13 40v11l2.6-2.2l1.8 4l1.8-.8l-1.8-4h3.6z" fill="#fff" stroke="#333" stroke-width="0.5"/><rect x="4.5" y="62" width="14" height="20" fill="#cfcfcf"/><rect x="6.5" y="64" width="10" height="4" fill="#3b4453"/><path d="M7 71h2.5M10.5 71h2.5M14 71h2.5M7 74.5h2.5M10.5 74.5h2.5M14 74.5h2.5M7 78h2.5M10.5 78h2.5M14 78h2.5" stroke="#3b4453" stroke-width="2"/></svg>
<span class="t" style="left:1614.4px;top:168px;font-size:15px;color:#e8e8e8;letter-spacing:0.141px;">Utilities</span>
<svg style="left:1671.8px;top:175px;" width="10" height="5" viewBox="0 0 10 5"><path d="M0 0H10L5.0 5Z" fill="#d4d4d4"/></svg>
<svg style="left:1725px;top:72px;" width="34" height="42" viewBox="0 0 34 42"><rect x="1" y="4" width="26" height="33" rx="2" fill="#d9a86a"/><rect x="8" y="1" width="12" height="6" rx="1.5" fill="#f0f0f0"/><path d="M12 15H26L33 22V41H12Z" fill="#e6e6e6"/><path d="M26 15V22H33Z" fill="#bdbdbd"/></svg>
<span class="t" style="left:1725.7px;top:120px;font-size:15px;color:#e8e8e8;letter-spacing:-1.132px;">Paste</span>
<svg style="left:1738.3px;top:141px;" width="7" height="3.5" viewBox="0 0 7 3.5"><path d="M0 0H7L3.5 3.5Z" fill="#d4d4d4"/></svg>
<svg style="left:1778px;top:74px;" width="22" height="52" viewBox="0 0 22 52"><path d="M1 1H12L16 5V17H1Z" fill="#dcdcdc"/><path d="M3 6h8M3 9h10M3 12h8" stroke="#777" stroke-width="1"/><path d="M8 8l9 9M18 8l-9 9" stroke="#f4f4f4" stroke-width="1.4"/><circle cx="10.5" cy="18" r="2" fill="none" stroke="#f4f4f4" stroke-width="1.2"/><circle cx="17.5" cy="18" r="2" fill="none" stroke="#f4f4f4" stroke-width="1.2"/><path d="M2 31H9L12 34V45H2Z" fill="#c4c4c4"/><path d="M7 35H14L18 39V51H7Z" fill="#e6e6e6" stroke="#3b4453" stroke-width="0.8"/></svg>
<svg style="left:1804.2px;top:82px;" width="7" height="3.5" viewBox="0 0 7 3.5"><path d="M0 0H7L3.5 3.5Z" fill="#d4d4d4"/></svg>
<svg style="left:1804.2px;top:113px;" width="7" height="3.5" viewBox="0 0 7 3.5"><path d="M0 0H7L3.5 3.5Z" fill="#d4d4d4"/></svg>
<span class="t" style="left:1731.8px;top:168px;font-size:15px;color:#e8e8e8;letter-spacing:0.144px;">Clipboard</span>
<svg style="left:1841px;top:77px;" width="42" height="30" viewBox="0 0 42 30"><path d="M0 0H20V12H41V30H0Z" fill="#e4e4e4"/></svg>
<span class="t" style="left:1847.0px;top:119px;font-size:15px;color:#e8e8e8;letter-spacing:-1.247px;">Base</span>
<svg style="left:1858.1px;top:140.5px;" width="7" height="3.5" viewBox="0 0 7 3.5"><path d="M0 0H7L3.5 3.5Z" fill="#d4d4d4"/></svg>
<span class="t" style="left:1828.9px;top:168px;font-size:15px;color:#e8e8e8;letter-spacing:-0.359px;">View</span>
<svg style="left:1867.4px;top:175px;" width="10" height="5" viewBox="0 0 10 5"><path d="M0 0H10L5.0 5Z" fill="#d4d4d4"/></svg>
<svg style="left:1888px;top:173px;" width="8" height="8" viewBox="0 0 8 8"><path d="M1 1L6 6M6.5 2V6.5H2" fill="none" stroke="#d4d4d4" stroke-width="1.2"/></svg>
<div style="left:3px;top:221px;width:1911px;height:759px;background:#3b4453;"></div>
<svg style="left:0px;top:188px;" width="300" height="34" viewBox="0 0 300 34"><path d="M90 3.2H216L204.300 33H77.500Z" fill="#3b4453"/><path d="M18 27.700L27 8.200M256 27.700L264 8.200" stroke="#4c5666" stroke-width="1.2"/><path d="M192 14L200.500 22.500M200.500 14L192 22.500" stroke="#b4b8c0" stroke-width="2"/><path d="M235 11.500V25.500M228 18.500H242" stroke="#f0f0f0" stroke-width="2.2"/></svg>
<span class="t" style="left:37.3px;top:198px;font-size:15px;color:#e8e8e8;letter-spacing:-0.177px;">Start</span>
<span class="t" style="left:98.3px;top:198px;font-size:15px;color:#fff;letter-spacing:-0.165px;font-weight:bold;">bairro_alto*</span>
<div style="left:7px;top:229px;width:434px;height:27px;background:#2e3441;border-radius:3px 3px 0 0"></div>
<div style="left:7px;top:258px;width:434px;height:10px;background:#2e3441;box-sizing:border-box;border:1px solid #262c38;border-bottom:none;border-radius:3px 3px 0 0;overflow:hidden"></div>
<div style="left:8px;top:259px;width:430px;height:9px;overflow:hidden"><span class="t" style="position:absolute;left:10px;top:3px;font-size:15px;font-weight:bold;color:#f0f0f0">Backup Files</span></div>
<div style="left:7px;top:277px;width:434px;height:27px;background:#2e3441;border-radius:3px 3px 0 0"></div>
<svg style="left:15px;top:237px;" width="5" height="10" viewBox="0 0 5 10"><rect x="0.0" y="0" width="1.2" height="1" fill="#aab0ba"/><rect x="0.0" y="2" width="1.2" height="1" fill="#aab0ba"/><rect x="0.0" y="4" width="1.2" height="1" fill="#aab0ba"/><rect x="0.0" y="6" width="1.2" height="1" fill="#aab0ba"/><rect x="0.0" y="8" width="1.2" height="1" fill="#aab0ba"/><rect x="2.4" y="0" width="1.2" height="1" fill="#aab0ba"/><rect x="2.4" y="2" width="1.2" height="1" fill="#aab0ba"/><rect x="2.4" y="4" width="1.2" height="1" fill="#aab0ba"/><rect x="2.4" y="6" width="1.2" height="1" fill="#aab0ba"/><rect x="2.4" y="8" width="1.2" height="1" fill="#aab0ba"/></svg>
<svg style="left:15px;top:285px;" width="5" height="10" viewBox="0 0 5 10"><rect x="0.0" y="0" width="1.2" height="1" fill="#aab0ba"/><rect x="0.0" y="2" width="1.2" height="1" fill="#aab0ba"/><rect x="0.0" y="4" width="1.2" height="1" fill="#aab0ba"/><rect x="0.0" y="6" width="1.2" height="1" fill="#aab0ba"/><rect x="0.0" y="8" width="1.2" height="1" fill="#aab0ba"/><rect x="2.4" y="0" width="1.2" height="1" fill="#aab0ba"/><rect x="2.4" y="2" width="1.2" height="1" fill="#aab0ba"/><rect x="2.4" y="4" width="1.2" height="1" fill="#aab0ba"/><rect x="2.4" y="6" width="1.2" height="1" fill="#aab0ba"/><rect x="2.4" y="8" width="1.2" height="1" fill="#aab0ba"/></svg>
<span class="t" style="left:25.5px;top:233px;font-size:15px;color:#ececec;letter-spacing:-0.922px;">DRAWING RECOVERY MANAGER</span>
<span class="t" style="left:25.5px;top:281px;font-size:15px;color:#ececec;letter-spacing:-1.214px;">LAYER PROPERTIES MANAGER</span>
<span class="t" style="left:12.2px;top:318px;font-size:15px;color:#ececec;letter-spacing:-0.263px;">Current layer: janelas</span>
<div style="left:285px;top:312px;width:156px;height:20px;background:#4b586e;"></div>
<span class="t" style="left:285.6px;top:314px;font-size:15px;color:#c0c5cd;letter-spacing:-0.219px;">Search for layer</span>
<svg style="left:422px;top:313px;" width="18" height="18" viewBox="0 0 18 18"><circle cx="7" cy="7" r="5.200" fill="#6a7486" stroke="#eee" stroke-width="1.3"/><path d="M11 11L16 16.500" stroke="#d8b87c" stroke-width="1.800"/></svg>
<svg style="left:0px;top:0px;" width="460" height="400" viewBox="0 0 460 400"><path d="M9 356V344H15.719999999999999L17.32 346.5H25V356Z" fill="#c8c8c8"/><path d="M19 354H29L25.500 358V363H22.500V358Z" fill="#c8c8c8" stroke="#3b4453" stroke-width="0.800"/><path d="M37 360.0V346.5H44.14L45.84 349.0H54V360.0Z" fill="#c8c8c8"/><rect x="62.500" y="343" width="1.200" height="21.500" fill="#262c38"/><path d="M77.5 350.5h10.5l-6 6h-10.5z" fill="#cccccc" stroke="#3b4453" stroke-width="0.700"/><path d="M77.5 345.0h10.5l-6 6h-10.5z" fill="#cccccc" stroke="#3b4453" stroke-width="0.700"/><rect x="81" y="351" width="10.500" height="12.500" fill="#ececec"/><rect x="83" y="353" width="6.500" height="4" fill="#4fa6ea"/><path d="M83.500 360.500h6" stroke="#555" stroke-width="1"/><path d="M109.0 354.2h10.5l-5.5 6h-10.5z" fill="#cccccc" stroke="#3b4453" stroke-width="0.700"/><path d="M109.0 349.6h10.5l-5.5 6h-10.5z" fill="#cccccc" stroke="#3b4453" stroke-width="0.700"/><path d="M109.0 345.0h10.5l-5.5 6h-10.5z" fill="#cccccc" stroke="#3b4453" stroke-width="0.700"/><circle cx="116.5" cy="358" r="2.67" fill="#f7d070"/><path d="M119.92 358.00L121.31 358.00M118.92 360.42L119.90 361.40M116.50 361.42L116.50 362.81M114.08 360.42L113.10 361.40M113.08 358.00L111.69 358.00M114.08 355.58L113.10 354.60M116.50 354.58L116.50 353.19M118.92 355.58L119.90 354.60" stroke="#f7d070" stroke-width="0.64" fill="none"/><path d="M136.0 354.2h10.5l-5.5 6h-10.5z" fill="#cccccc" stroke="#3b4453" stroke-width="0.700"/><path d="M136.0 349.6h10.5l-5.5 6h-10.5z" fill="#cccccc" stroke="#3b4453" stroke-width="0.700"/><path d="M136.0 345.0h10.5l-5.5 6h-10.5z" fill="#cccccc" stroke="#3b4453" stroke-width="0.700"/><circle cx="144.500" cy="358.500" r="4.300" fill="none" stroke="#4cc0d0" stroke-width="1"/><path d="M144.500 354v9M140.600 356.200l7.800 4.600M148.400 356.200l-7.800 4.600" stroke="#4cc0d0" stroke-width="0.900"/><path d="M163.1 354.2h10.5l-5.5 6h-10.5z" fill="#cccccc" stroke="#3b4453" stroke-width="0.700"/><path d="M163.1 349.6h10.5l-5.5 6h-10.5z" fill="#cccccc" stroke="#3b4453" stroke-width="0.700"/><path d="M163.1 345.0h10.5l-5.5 6h-10.5z" fill="#cccccc" stroke="#3b4453" stroke-width="0.700"/><path d="M169.500 356l6 6M175.500 356l-6 6" stroke="#e8404a" stroke-width="1.800"/><path d="M190.0 354.2h10.5l-5.5 6h-10.5z" fill="#cccccc" stroke="#3b4453" stroke-width="0.700"/><path d="M190.0 349.6h10.5l-5.5 6h-10.5z" fill="#cccccc" stroke="#3b4453" stroke-width="0.700"/><path d="M190.0 345.0h10.5l-5.5 6h-10.5z" fill="#cccccc" stroke="#3b4453" stroke-width="0.700"/><path d="M194.500 358.500l3 3l5.500-6.500" stroke="#3cc04c" stroke-width="1.800" fill="none"/><path d="M354 352A8 8 0 0 1 368.500 349.500" fill="none" stroke="#3ed07c" stroke-width="2.400"/><path d="M371.500 345.500v7h-7z" fill="#3ed07c"/><path d="M370 355.500A8 8 0 0 1 355.500 358" fill="none" stroke="#3ed07c" stroke-width="2.400"/><path d="M352.500 362v-7h7z" fill="#3ed07c"/><rect x="381" y="345.500" width="9.500" height="9.500" fill="#d0d0d0"/><path d="M386 356H397.500L391 361.500H379.700Z" fill="#6a7280"/><rect x="414" y="344" width="4" height="5" fill="#e4e4e4" transform="rotate(0 416 354)"/><rect x="414" y="344" width="4" height="5" fill="#e4e4e4" transform="rotate(45 416 354)"/><rect x="414" y="344" width="4" height="5" fill="#e4e4e4" transform="rotate(90 416 354)"/><rect x="414" y="344" width="4" height="5" fill="#e4e4e4" transform="rotate(135 416 354)"/><rect x="414" y="344" width="4" height="5" fill="#e4e4e4" transform="rotate(180 416 354)"/><rect x="414" y="344" width="4" height="5" fill="#e4e4e4" transform="rotate(225 416 354)"/><rect x="414" y="344" width="4" height="5" fill="#e4e4e4" transform="rotate(270 416 354)"/><rect x="414" y="344" width="4" height="5" fill="#e4e4e4" transform="rotate(315 416 354)"/><circle cx="416" cy="354" r="5.500" fill="none" stroke="#e4e4e4" stroke-width="4"/></svg>
<div style="left:7px;top:368px;width:31px;height:555px;background:#363e4c;"></div>
<div style="left:44px;top:368px;width:114px;height:29px;background:#465169;"></div>
<div style="left:161px;top:368px;width:279px;height:29px;background:#465169;"></div>
<div style="left:158px;top:368px;width:3px;height:535px;background:#2b323e;"></div>
<div style="left:66px;top:368px;width:1px;height:29px;background:#343c4c;"></div>
<div style="left:183px;top:368px;width:1px;height:29px;background:#343c4c;"></div>
<div style="left:206px;top:368px;width:1px;height:29px;background:#343c4c;"></div>
<div style="left:319px;top:368px;width:1px;height:29px;background:#343c4c;"></div>
<div style="left:342px;top:368px;width:1px;height:29px;background:#343c4c;"></div>
<div style="left:365px;top:368px;width:1px;height:29px;background:#343c4c;"></div>
<div style="left:425px;top:368px;width:1px;height:29px;background:#343c4c;"></div>
<span class="t" style="left:49.2px;top:374px;font-size:15px;color:#ececec;letter-spacing:-1.704px;">S...</span>
<span class="t" style="left:72.2px;top:374px;font-size:15px;color:#ececec;letter-spacing:-0.104px;">Name</span>
<svg style="left:148px;top:381px;" width="8" height="5" viewBox="0 0 8 5"><path d="M0 4.500H8L4 0Z" fill="#dcdcdc"/></svg>
<span class="t" style="left:166.0px;top:374px;font-size:15px;color:#ececec;letter-spacing:-1.339px;">O..</span>
<span class="t" style="left:189.5px;top:374px;font-size:15px;color:#ececec;letter-spacing:-1.179px;">F...</span>
<span class="t" style="left:212.0px;top:374px;font-size:15px;color:#ececec;letter-spacing:-0.733px;">VP Freeze</span>
<span class="t" style="left:325.6px;top:374px;font-size:15px;color:#ececec;letter-spacing:-1.590px;">L...</span>
<span class="t" style="left:348.5px;top:374px;font-size:15px;color:#ececec;letter-spacing:-1.145px;">P...</span>
<span class="t" style="left:371.0px;top:374px;font-size:15px;color:#ececec;letter-spacing:0.031px;">Color</span>
<div style="left:426px;top:368px;width:14px;height:29px;overflow:hidden"><span class="t" style="position:absolute;left:5.500px;top:6px;font-size:15px;color:#ececec">V</span></div>
<svg style="left:18px;top:377px;" width="15" height="12" viewBox="0 0 15 12"><path d="M1.200 1L6 5.800L1.200 10.600M8.200 1L13 5.800L8.200 10.600" fill="none" stroke="#dcdcdc" stroke-width="2.300"/></svg>
<svg style="left:18px;top:905.5px;" width="15" height="12" viewBox="0 0 15 12"><path d="M1.200 1L6 5.800L1.200 10.600M8.200 1L13 5.800L8.200 10.600" fill="none" stroke="#dcdcdc" stroke-width="2.300"/></svg>
<span class="t" style="left:71.6px;top:400px;font-size:15px;color:#f2f2f2;">0</span>
<span class="t" style="left:388.4px;top:400px;font-size:15px;color:#f2f2f2;">wh...</span>
<span class="t" style="left:71.6px;top:423px;font-size:15px;color:#f2f2f2;letter-spacing:-0.121px;">aux</span>
<span class="t" style="left:388.4px;top:423px;font-size:15px;color:#f2f2f2;">red</span>
<span class="t" style="left:71.6px;top:446px;font-size:15px;color:#f2f2f2;letter-spacing:-0.098px;">folha</span>
<span class="t" style="left:388.4px;top:446px;font-size:15px;color:#f2f2f2;">ma...</span>
<div style="left:44px;top:466px;width:114px;height:23px;background:#7488ab;"></div>
<div style="left:161px;top:466px;width:279px;height:23px;background:#7589ab;"></div>
<span class="t" style="left:71.6px;top:469px;font-size:15px;color:#f2f2f2;letter-spacing:-0.102px;">janelas</span>
<span class="t" style="left:388.4px;top:469px;font-size:15px;color:#f2f2f2;">30</span>
<span class="t" style="left:70.5px;top:492px;font-size:15px;color:#f2f2f2;letter-spacing:-1.400px;">PDF_0</span>
<span class="t" style="left:388.4px;top:492px;font-size:15px;color:#f2f2f2;">wh...</span>
<span class="t" style="left:70.5px;top:515px;font-size:15px;color:#f2f2f2;letter-spacing:-0.848px;">PDF_LIN_A...</span>
<span class="t" style="left:388.4px;top:515px;font-size:15px;color:#f2f2f2;">10...</span>
<span class="t" style="left:70.5px;top:538px;font-size:15px;color:#f2f2f2;letter-spacing:-0.856px;">PDF_LIN_C...</span>
<span class="t" style="left:388.4px;top:538px;font-size:15px;color:#f2f2f2;">wh...</span>
<span class="t" style="left:70.5px;top:561px;font-size:15px;color:#f2f2f2;letter-spacing:-0.856px;">PDF_LIN_C...</span>
<span class="t" style="left:388.4px;top:561px;font-size:15px;color:#f2f2f2;">wh...</span>
<span class="t" style="left:70.5px;top:584px;font-size:15px;color:#f2f2f2;letter-spacing:-0.795px;">PDF_LIN_I...</span>
<span class="t" style="left:388.4px;top:584px;font-size:15px;color:#f2f2f2;">wh...</span>
<span class="t" style="left:70.5px;top:607px;font-size:15px;color:#f2f2f2;letter-spacing:-0.825px;">PDF_LIN_T...</span>
<span class="t" style="left:388.4px;top:607px;font-size:15px;color:#f2f2f2;">wh...</span>
<span class="t" style="left:70.5px;top:630px;font-size:15px;color:#f2f2f2;letter-spacing:-0.836px;">PDF_LIN_V...</span>
<span class="t" style="left:388.4px;top:630px;font-size:15px;color:#f2f2f2;">wh...</span>
<span class="t" style="left:70.5px;top:653px;font-size:15px;color:#f2f2f2;letter-spacing:-0.836px;">PDF_LIN_V...</span>
<span class="t" style="left:388.4px;top:653px;font-size:15px;color:#f2f2f2;">wh...</span>
<span class="t" style="left:70.5px;top:676px;font-size:15px;color:#f2f2f2;letter-spacing:-0.836px;">PDF_LIN_V...</span>
<span class="t" style="left:388.4px;top:676px;font-size:15px;color:#f2f2f2;">wh...</span>
<span class="t" style="left:70.5px;top:699px;font-size:15px;color:#f2f2f2;letter-spacing:-0.836px;">PDF_LIN_V...</span>
<span class="t" style="left:388.4px;top:699px;font-size:15px;color:#f2f2f2;">84,...</span>
<span class="t" style="left:70.5px;top:722px;font-size:15px;color:#f2f2f2;letter-spacing:-0.908px;">PDF_OUT_...</span>
<span class="t" style="left:388.4px;top:722px;font-size:15px;color:#f2f2f2;">16...</span>
<span class="t" style="left:70.5px;top:745px;font-size:15px;color:#f2f2f2;letter-spacing:-0.908px;">PDF_OUT_...</span>
<span class="t" style="left:388.4px;top:745px;font-size:15px;color:#f2f2f2;">16...</span>
<span class="t" style="left:70.5px;top:768px;font-size:15px;color:#f2f2f2;letter-spacing:-0.908px;">PDF_OUT_...</span>
<span class="t" style="left:388.4px;top:768px;font-size:15px;color:#f2f2f2;">wh...</span>
<span class="t" style="left:70.5px;top:791px;font-size:15px;color:#f2f2f2;letter-spacing:-0.905px;">PDF_Text</span>
<span class="t" style="left:388.4px;top:791px;font-size:15px;color:#f2f2f2;">16...</span>
<span class="t" style="left:70.5px;top:814px;font-size:15px;color:#f2f2f2;letter-spacing:-0.898px;">PDF_TOP_...</span>
<span class="t" style="left:388.4px;top:814px;font-size:15px;color:#f2f2f2;">wh...</span>
<span class="t" style="left:70.5px;top:837px;font-size:15px;color:#f2f2f2;letter-spacing:-0.898px;">PDF_TOP_...</span>
<span class="t" style="left:388.4px;top:837px;font-size:15px;color:#f2f2f2;">84,...</span>
<span class="t" style="left:70.5px;top:860px;font-size:15px;color:#f2f2f2;letter-spacing:-0.871px;">PDF_TXT_T...</span>
<span class="t" style="left:388.4px;top:860px;font-size:15px;color:#f2f2f2;">wh...</span>
<svg style="left:0;top:0;position:absolute;overflow:hidden" width="440" height="900" viewBox="0 0 440 900"><path d="M54 404H62.800L56 411H46.800Z" fill="#86caff"/><path d="M165.70 406.00a5.60 5.60 0 1 1 11.20 0c0 2.60 -3.20 3.40 -3.20 5.00h-4.80c0 -1.60 -3.20 -2.40 -3.20 -5.00z" fill="#fcd074"/><path d="M169.00 411.50h4.60v1.80a2.30 2.00 0 0 1 -4.60 0z" fill="#ececec"/><circle cx="194.4" cy="407.3" r="4.60" fill="#fcd074"/><path d="M200.30 407.30L202.70 407.30M198.57 411.47L200.27 413.17M194.40 413.20L194.40 415.60M190.23 411.47L188.53 413.17M188.50 407.30L186.10 407.30M190.23 403.13L188.53 401.43M194.40 401.40L194.40 399.00M198.57 403.13L200.27 401.43" stroke="#fcd074" stroke-width="1.10" fill="none"/><g fill="none" stroke="#d4d4d4" stroke-width="0.97"><path d="M255.5 404.02V400.5H259.02M265.18 400.5H268.7V404.02M255.5 409.3V412.82H259.02"/><rect x="257.964" y="402.964" width="8.272" height="7.392" fill="#5c6576" stroke="#a8acb4"/></g><circle cx="266.324" cy="411.324" r="2.02" fill="#f8cf6c"/><path d="M268.92 411.32L269.98 411.32M268.16 413.16L268.91 413.91M266.32 413.92L266.32 414.98M264.49 413.16L263.74 413.91M263.73 411.32L262.67 411.32M264.49 409.49L263.74 408.74M266.32 408.73L266.32 407.67M268.16 409.49L268.91 408.74" stroke="#f8cf6c" stroke-width="0.48" fill="none"/><rect x="323" y="406.5" width="11.5" height="9.0" fill="#f7cb66"/><path d="M330.2 406.5V405.1A3.1 3.1 0 0 1 336.4 405.1V407.0" fill="none" stroke="#f7cb66" stroke-width="2.0"/><rect x="327.8" y="409.5" width="2.0" height="3.5" fill="#3b4453"/><rect x="350" y="400.5" width="8" height="4" fill="#f2f2f2"/><rect x="346" y="404.5" width="16" height="7" rx="1" fill="#e0e0e0"/><rect x="350" y="409.5" width="8" height="6.500" fill="#62b4f2" stroke="#f2f2f2" stroke-width="1"/><rect x="369.500" y="401.5" width="14" height="14" fill="#000000" stroke="#d8d8d8" stroke-width="1"/><rect x="429.500" y="401.5" width="14" height="14" fill="#000000" stroke="#d8d8d8" stroke-width="1"/><path d="M54 427H62.800L56 434H46.800Z" fill="#86caff"/><path d="M165.70 429.00a5.60 5.60 0 1 1 11.20 0c0 2.60 -3.20 3.40 -3.20 5.00h-4.80c0 -1.60 -3.20 -2.40 -3.20 -5.00z" fill="#fcd074"/><path d="M169.00 434.50h4.60v1.80a2.30 2.00 0 0 1 -4.60 0z" fill="#ececec"/><path d="M194.5 438.0L194.5 424.0M188.4 434.5L200.6 427.5M188.4 427.5L200.6 434.5" stroke="#56c4d6" stroke-width="1.800" fill="none"/><circle cx="194.5" cy="431" r="4.200" fill="none" stroke="#56c4d6" stroke-width="1.500"/><g fill="none" stroke="#d4d4d4" stroke-width="0.97"><path d="M255.5 427.02V423.5H259.02M265.18 423.5H268.7V427.02M255.5 432.3V435.82H259.02"/><rect x="257.964" y="425.964" width="8.272" height="7.392" fill="#5c6576" stroke="#a8acb4"/></g><circle cx="266.324" cy="434.324" r="2.02" fill="#f8cf6c"/><path d="M268.92 434.32L269.98 434.32M268.16 436.16L268.91 436.91M266.32 436.92L266.32 437.98M264.49 436.16L263.74 436.91M263.73 434.32L262.67 434.32M264.49 432.49L263.74 431.74M266.32 431.73L266.32 430.67M268.16 432.49L268.91 431.74" stroke="#f8cf6c" stroke-width="0.48" fill="none"/><rect x="323" y="429.5" width="11.5" height="9.0" fill="#f7cb66"/><path d="M330.2 429.5V428.1A3.1 3.1 0 0 1 336.4 428.1V430.0" fill="none" stroke="#f7cb66" stroke-width="2.0"/><rect x="327.8" y="432.5" width="2.0" height="3.5" fill="#3b4453"/><rect x="350" y="423.5" width="8" height="4" fill="#f2f2f2"/><rect x="346" y="427.5" width="16" height="7" rx="1" fill="#e0e0e0"/><rect x="350" y="432.5" width="8" height="6.500" fill="#62b4f2" stroke="#f2f2f2" stroke-width="1"/><rect x="369.500" y="424.5" width="14" height="14" fill="#ff0000" stroke="#d8d8d8" stroke-width="1"/><rect x="429.500" y="424.5" width="14" height="14" fill="#ff0000" stroke="#d8d8d8" stroke-width="1"/><path d="M54 450H62.800L56 457H46.800Z" fill="#86caff"/><path d="M165.70 452.00a5.60 5.60 0 1 1 11.20 0c0 2.60 -3.20 3.40 -3.20 5.00h-4.80c0 -1.60 -3.20 -2.40 -3.20 -5.00z" fill="#fcd074"/><path d="M169.00 457.50h4.60v1.80a2.30 2.00 0 0 1 -4.60 0z" fill="#ececec"/><circle cx="194.4" cy="453.3" r="4.60" fill="#fcd074"/><path d="M200.30 453.30L202.70 453.30M198.57 457.47L200.27 459.17M194.40 459.20L194.40 461.60M190.23 457.47L188.53 459.17M188.50 453.30L186.10 453.30M190.23 449.13L188.53 447.43M194.40 447.40L194.40 445.00M198.57 449.13L200.27 447.43" stroke="#fcd074" stroke-width="1.10" fill="none"/><g fill="none" stroke="#d4d4d4" stroke-width="0.97"><path d="M255.5 450.02V446.5H259.02M265.18 446.5H268.7V450.02M255.5 455.3V458.82H259.02"/><rect x="257.964" y="448.964" width="8.272" height="7.392" fill="#5c6576" stroke="#a8acb4"/></g><circle cx="266.324" cy="457.324" r="2.02" fill="#f8cf6c"/><path d="M268.92 457.32L269.98 457.32M268.16 459.16L268.91 459.91M266.32 459.92L266.32 460.98M264.49 459.16L263.74 459.91M263.73 457.32L262.67 457.32M264.49 455.49L263.74 454.74M266.32 454.73L266.32 453.67M268.16 455.49L268.91 454.74" stroke="#f8cf6c" stroke-width="0.48" fill="none"/><rect x="323" y="452.5" width="11.5" height="9.0" fill="#f7cb66"/><path d="M330.2 452.5V451.1A3.1 3.1 0 0 1 336.4 451.1V453.0" fill="none" stroke="#f7cb66" stroke-width="2.0"/><rect x="327.8" y="455.5" width="2.0" height="3.5" fill="#3b4453"/><rect x="350" y="446.5" width="8" height="4" fill="#f2f2f2"/><rect x="346" y="450.5" width="16" height="7" rx="1" fill="#e0e0e0"/><rect x="350" y="455.5" width="8" height="6.500" fill="#62b4f2" stroke="#f2f2f2" stroke-width="1"/><rect x="369.500" y="447.5" width="14" height="14" fill="#ff00ff" stroke="#d8d8d8" stroke-width="1"/><rect x="429.500" y="447.5" width="14" height="14" fill="#ff00ff" stroke="#d8d8d8" stroke-width="1"/><path d="M48.500 476.5l4.300 4.300l8-8.800" stroke="#4bd078" stroke-width="2.400" fill="none"/><path d="M165.70 475.00a5.60 5.60 0 1 1 11.20 0c0 2.60 -3.20 3.40 -3.20 5.00h-4.80c0 -1.60 -3.20 -2.40 -3.20 -5.00z" fill="#fcd074"/><path d="M169.00 480.50h4.60v1.80a2.30 2.00 0 0 1 -4.60 0z" fill="#ececec"/><circle cx="194.4" cy="476.3" r="4.60" fill="#fcd074"/><path d="M200.30 476.30L202.70 476.30M198.57 480.47L200.27 482.17M194.40 482.20L194.40 484.60M190.23 480.47L188.53 482.17M188.50 476.30L186.10 476.30M190.23 472.13L188.53 470.43M194.40 470.40L194.40 468.00M198.57 472.13L200.27 470.43" stroke="#fcd074" stroke-width="1.10" fill="none"/><g fill="none" stroke="#d4d4d4" stroke-width="0.97"><path d="M255.5 473.02V469.5H259.02M265.18 469.5H268.7V473.02M255.5 478.3V481.82H259.02"/><rect x="257.964" y="471.964" width="8.272" height="7.392" fill="#5c6576" stroke="#a8acb4"/></g><circle cx="266.324" cy="480.324" r="2.02" fill="#f8cf6c"/><path d="M268.92 480.32L269.98 480.32M268.16 482.16L268.91 482.91M266.32 482.92L266.32 483.98M264.49 482.16L263.74 482.91M263.73 480.32L262.67 480.32M264.49 478.49L263.74 477.74M266.32 477.73L266.32 476.67M268.16 478.49L268.91 477.74" stroke="#f8cf6c" stroke-width="0.48" fill="none"/><rect x="323" y="475.5" width="11.5" height="9.0" fill="#f7cb66"/><path d="M330.2 475.5V474.1A3.1 3.1 0 0 1 336.4 474.1V476.0" fill="none" stroke="#f7cb66" stroke-width="2.0"/><rect x="327.8" y="478.5" width="2.0" height="3.5" fill="#3b4453"/><rect x="350" y="469.5" width="8" height="4" fill="#f2f2f2"/><rect x="346" y="473.5" width="16" height="7" rx="1" fill="#e0e0e0"/><rect x="350" y="478.5" width="8" height="6.500" fill="#62b4f2" stroke="#f2f2f2" stroke-width="1"/><rect x="369.500" y="470.5" width="14" height="14" fill="#ff7f00" stroke="#d8d8d8" stroke-width="1"/><rect x="429.500" y="470.5" width="14" height="14" fill="#ff7f00" stroke="#d8d8d8" stroke-width="1"/><path d="M53.500 496.4H62L56.500 502.8H48Z" fill="#d8d8d8"/><path d="M165.70 498.00a5.60 5.60 0 1 1 11.20 0c0 2.60 -3.20 3.40 -3.20 5.00h-4.80c0 -1.60 -3.20 -2.40 -3.20 -5.00z" fill="#fcd074"/><path d="M169.00 503.50h4.60v1.80a2.30 2.00 0 0 1 -4.60 0z" fill="#ececec"/><circle cx="194.4" cy="499.3" r="4.60" fill="#fcd074"/><path d="M200.30 499.30L202.70 499.30M198.57 503.47L200.27 505.17M194.40 505.20L194.40 507.60M190.23 503.47L188.53 505.17M188.50 499.30L186.10 499.30M190.23 495.13L188.53 493.43M194.40 493.40L194.40 491.00M198.57 495.13L200.27 493.43" stroke="#fcd074" stroke-width="1.10" fill="none"/><g fill="none" stroke="#d4d4d4" stroke-width="0.97"><path d="M255.5 496.02V492.5H259.02M265.18 492.5H268.7V496.02M255.5 501.3V504.82H259.02"/><rect x="257.964" y="494.964" width="8.272" height="7.392" fill="#5c6576" stroke="#a8acb4"/></g><circle cx="266.324" cy="503.324" r="2.02" fill="#f8cf6c"/><path d="M268.92 503.32L269.98 503.32M268.16 505.16L268.91 505.91M266.32 505.92L266.32 506.98M264.49 505.16L263.74 505.91M263.73 503.32L262.67 503.32M264.49 501.49L263.74 500.74M266.32 500.73L266.32 499.67M268.16 501.49L268.91 500.74" stroke="#f8cf6c" stroke-width="0.48" fill="none"/><rect x="323" y="498.5" width="11.5" height="9.0" fill="#f7cb66"/><path d="M330.2 498.5V497.1A3.1 3.1 0 0 1 336.4 497.1V499.0" fill="none" stroke="#f7cb66" stroke-width="2.0"/><rect x="327.8" y="501.5" width="2.0" height="3.5" fill="#3b4453"/><rect x="350" y="492.5" width="8" height="4" fill="#f2f2f2"/><rect x="346" y="496.5" width="16" height="7" rx="1" fill="#e0e0e0"/><rect x="350" y="501.5" width="8" height="6.500" fill="#62b4f2" stroke="#f2f2f2" stroke-width="1"/><rect x="369.500" y="493.5" width="14" height="14" fill="#000000" stroke="#d8d8d8" stroke-width="1"/><rect x="429.500" y="493.5" width="14" height="14" fill="#000000" stroke="#d8d8d8" stroke-width="1"/><path d="M53.500 519.4H62L56.500 525.8H48Z" fill="#d8d8d8"/><path d="M165.70 521.00a5.60 5.60 0 1 1 11.20 0c0 2.60 -3.20 3.40 -3.20 5.00h-4.80c0 -1.60 -3.20 -2.40 -3.20 -5.00z" fill="#fcd074"/><path d="M169.00 526.50h4.60v1.80a2.30 2.00 0 0 1 -4.60 0z" fill="#ececec"/><circle cx="194.4" cy="522.3" r="4.60" fill="#fcd074"/><path d="M200.30 522.30L202.70 522.30M198.57 526.47L200.27 528.17M194.40 528.20L194.40 530.60M190.23 526.47L188.53 528.17M188.50 522.30L186.10 522.30M190.23 518.13L188.53 516.43M194.40 516.40L194.40 514.00M198.57 518.13L200.27 516.43" stroke="#fcd074" stroke-width="1.10" fill="none"/><g fill="none" stroke="#d4d4d4" stroke-width="0.97"><path d="M255.5 519.02V515.5H259.02M265.18 515.5H268.7V519.02M255.5 524.3V527.82H259.02"/><rect x="257.964" y="517.964" width="8.272" height="7.392" fill="#5c6576" stroke="#a8acb4"/></g><circle cx="266.324" cy="526.324" r="2.02" fill="#f8cf6c"/><path d="M268.92 526.32L269.98 526.32M268.16 528.16L268.91 528.91M266.32 528.92L266.32 529.98M264.49 528.16L263.74 528.91M263.73 526.32L262.67 526.32M264.49 524.49L263.74 523.74M266.32 523.73L266.32 522.67M268.16 524.49L268.91 523.74" stroke="#f8cf6c" stroke-width="0.48" fill="none"/><rect x="323" y="521.5" width="11.5" height="9.0" fill="#f7cb66"/><path d="M330.2 521.5V520.1A3.1 3.1 0 0 1 336.4 520.1V522.0" fill="none" stroke="#f7cb66" stroke-width="2.0"/><rect x="327.8" y="524.5" width="2.0" height="3.5" fill="#3b4453"/><rect x="350" y="515.5" width="8" height="4" fill="#f2f2f2"/><rect x="346" y="519.5" width="16" height="7" rx="1" fill="#e0e0e0"/><rect x="350" y="524.5" width="8" height="6.500" fill="#62b4f2" stroke="#f2f2f2" stroke-width="1"/><rect x="369.500" y="516.5" width="14" height="14" fill="#5f9563" stroke="#d8d8d8" stroke-width="1"/><rect x="429.500" y="516.5" width="14" height="14" fill="#5f9563" stroke="#d8d8d8" stroke-width="1"/><path d="M53.500 542.4H62L56.500 548.8H48Z" fill="#d8d8d8"/><path d="M165.70 544.00a5.60 5.60 0 1 1 11.20 0c0 2.60 -3.20 3.40 -3.20 5.00h-4.80c0 -1.60 -3.20 -2.40 -3.20 -5.00z" fill="#fcd074"/><path d="M169.00 549.50h4.60v1.80a2.30 2.00 0 0 1 -4.60 0z" fill="#ececec"/><circle cx="194.4" cy="545.3" r="4.60" fill="#fcd074"/><path d="M200.30 545.30L202.70 545.30M198.57 549.47L200.27 551.17M194.40 551.20L194.40 553.60M190.23 549.47L188.53 551.17M188.50 545.30L186.10 545.30M190.23 541.13L188.53 539.43M194.40 539.40L194.40 537.00M198.57 541.13L200.27 539.43" stroke="#fcd074" stroke-width="1.10" fill="none"/><g fill="none" stroke="#d4d4d4" stroke-width="0.97"><path d="M255.5 542.02V538.5H259.02M265.18 538.5H268.7V542.02M255.5 547.3V550.82H259.02"/><rect x="257.964" y="540.964" width="8.272" height="7.392" fill="#5c6576" stroke="#a8acb4"/></g><circle cx="266.324" cy="549.324" r="2.02" fill="#f8cf6c"/><path d="M268.92 549.32L269.98 549.32M268.16 551.16L268.91 551.91M266.32 551.92L266.32 552.98M264.49 551.16L263.74 551.91M263.73 549.32L262.67 549.32M264.49 547.49L263.74 546.74M266.32 546.73L266.32 545.67M268.16 547.49L268.91 546.74" stroke="#f8cf6c" stroke-width="0.48" fill="none"/><rect x="323" y="544.5" width="11.5" height="9.0" fill="#f7cb66"/><path d="M330.2 544.5V543.1A3.1 3.1 0 0 1 336.4 543.1V545.0" fill="none" stroke="#f7cb66" stroke-width="2.0"/><rect x="327.8" y="547.5" width="2.0" height="3.5" fill="#3b4453"/><rect x="350" y="538.5" width="8" height="4" fill="#f2f2f2"/><rect x="346" y="542.5" width="16" height="7" rx="1" fill="#e0e0e0"/><rect x="350" y="547.5" width="8" height="6.500" fill="#62b4f2" stroke="#f2f2f2" stroke-width="1"/><rect x="369.500" y="539.5" width="14" height="14" fill="#000000" stroke="#d8d8d8" stroke-width="1"/><rect x="429.500" y="539.5" width="14" height="14" fill="#000000" stroke="#d8d8d8" stroke-width="1"/><path d="M53.500 565.4H62L56.500 571.8H48Z" fill="#d8d8d8"/><path d="M165.70 567.00a5.60 5.60 0 1 1 11.20 0c0 2.60 -3.20 3.40 -3.20 5.00h-4.80c0 -1.60 -3.20 -2.40 -3.20 -5.00z" fill="#fcd074"/><path d="M169.00 572.50h4.60v1.80a2.30 2.00 0 0 1 -4.60 0z" fill="#ececec"/><circle cx="194.4" cy="568.3" r="4.60" fill="#fcd074"/><path d="M200.30 568.30L202.70 568.30M198.57 572.47L200.27 574.17M194.40 574.20L194.40 576.60M190.23 572.47L188.53 574.17M188.50 568.30L186.10 568.30M190.23 564.13L188.53 562.43M194.40 562.40L194.40 560.00M198.57 564.13L200.27 562.43" stroke="#fcd074" stroke-width="1.10" fill="none"/><g fill="none" stroke="#d4d4d4" stroke-width="0.97"><path d="M255.5 565.02V561.5H259.02M265.18 561.5H268.7V565.02M255.5 570.3V573.82H259.02"/><rect x="257.964" y="563.964" width="8.272" height="7.392" fill="#5c6576" stroke="#a8acb4"/></g><circle cx="266.324" cy="572.324" r="2.02" fill="#f8cf6c"/><path d="M268.92 572.32L269.98 572.32M268.16 574.16L268.91 574.91M266.32 574.92L266.32 575.98M264.49 574.16L263.74 574.91M263.73 572.32L262.67 572.32M264.49 570.49L263.74 569.74M266.32 569.73L266.32 568.67M268.16 570.49L268.91 569.74" stroke="#f8cf6c" stroke-width="0.48" fill="none"/><rect x="323" y="567.5" width="11.5" height="9.0" fill="#f7cb66"/><path d="M330.2 567.5V566.1A3.1 3.1 0 0 1 336.4 566.1V568.0" fill="none" stroke="#f7cb66" stroke-width="2.0"/><rect x="327.8" y="570.5" width="2.0" height="3.5" fill="#3b4453"/><rect x="350" y="561.5" width="8" height="4" fill="#f2f2f2"/><rect x="346" y="565.5" width="16" height="7" rx="1" fill="#e0e0e0"/><rect x="350" y="570.5" width="8" height="6.500" fill="#62b4f2" stroke="#f2f2f2" stroke-width="1"/><rect x="369.500" y="562.5" width="14" height="14" fill="#000000" stroke="#d8d8d8" stroke-width="1"/><rect x="429.500" y="562.5" width="14" height="14" fill="#000000" stroke="#d8d8d8" stroke-width="1"/><path d="M53.500 588.4H62L56.500 594.8H48Z" fill="#d8d8d8"/><path d="M165.70 590.00a5.60 5.60 0 1 1 11.20 0c0 2.60 -3.20 3.40 -3.20 5.00h-4.80c0 -1.60 -3.20 -2.40 -3.20 -5.00z" fill="#fcd074"/><path d="M169.00 595.50h4.60v1.80a2.30 2.00 0 0 1 -4.60 0z" fill="#ececec"/><circle cx="194.4" cy="591.3" r="4.60" fill="#fcd074"/><path d="M200.30 591.30L202.70 591.30M198.57 595.47L200.27 597.17M194.40 597.20L194.40 599.60M190.23 595.47L188.53 597.17M188.50 591.30L186.10 591.30M190.23 587.13L188.53 585.43M194.40 585.40L194.40 583.00M198.57 587.13L200.27 585.43" stroke="#fcd074" stroke-width="1.10" fill="none"/><g fill="none" stroke="#d4d4d4" stroke-width="0.97"><path d="M255.5 588.02V584.5H259.02M265.18 584.5H268.7V588.02M255.5 593.3V596.82H259.02"/><rect x="257.964" y="586.964" width="8.272" height="7.392" fill="#5c6576" stroke="#a8acb4"/></g><circle cx="266.324" cy="595.324" r="2.02" fill="#f8cf6c"/><path d="M268.92 595.32L269.98 595.32M268.16 597.16L268.91 597.91M266.32 597.92L266.32 598.98M264.49 597.16L263.74 597.91M263.73 595.32L262.67 595.32M264.49 593.49L263.74 592.74M266.32 592.73L266.32 591.67M268.16 593.49L268.91 592.74" stroke="#f8cf6c" stroke-width="0.48" fill="none"/><rect x="323" y="590.5" width="11.5" height="9.0" fill="#f7cb66"/><path d="M330.2 590.5V589.1A3.1 3.1 0 0 1 336.4 589.1V591.0" fill="none" stroke="#f7cb66" stroke-width="2.0"/><rect x="327.8" y="593.5" width="2.0" height="3.5" fill="#3b4453"/><rect x="350" y="584.5" width="8" height="4" fill="#f2f2f2"/><rect x="346" y="588.5" width="16" height="7" rx="1" fill="#e0e0e0"/><rect x="350" y="593.5" width="8" height="6.500" fill="#62b4f2" stroke="#f2f2f2" stroke-width="1"/><rect x="369.500" y="585.5" width="14" height="14" fill="#000000" stroke="#d8d8d8" stroke-width="1"/><rect x="429.500" y="585.5" width="14" height="14" fill="#000000" stroke="#d8d8d8" stroke-width="1"/><path d="M53.500 611.4H62L56.500 617.8H48Z" fill="#d8d8d8"/><path d="M165.70 613.00a5.60 5.60 0 1 1 11.20 0c0 2.60 -3.20 3.40 -3.20 5.00h-4.80c0 -1.60 -3.20 -2.40 -3.20 -5.00z" fill="#fcd074"/><path d="M169.00 618.50h4.60v1.80a2.30 2.00 0 0 1 -4.60 0z" fill="#ececec"/><circle cx="194.4" cy="614.3" r="4.60" fill="#fcd074"/><path d="M200.30 614.30L202.70 614.30M198.57 618.47L200.27 620.17M194.40 620.20L194.40 622.60M190.23 618.47L188.53 620.17M188.50 614.30L186.10 614.30M190.23 610.13L188.53 608.43M194.40 608.40L194.40 606.00M198.57 610.13L200.27 608.43" stroke="#fcd074" stroke-width="1.10" fill="none"/><g fill="none" stroke="#d4d4d4" stroke-width="0.97"><path d="M255.5 611.02V607.5H259.02M265.18 607.5H268.7V611.02M255.5 616.3V619.82H259.02"/><rect x="257.964" y="609.964" width="8.272" height="7.392" fill="#5c6576" stroke="#a8acb4"/></g><circle cx="266.324" cy="618.324" r="2.02" fill="#f8cf6c"/><path d="M268.92 618.32L269.98 618.32M268.16 620.16L268.91 620.91M266.32 620.92L266.32 621.98M264.49 620.16L263.74 620.91M263.73 618.32L262.67 618.32M264.49 616.49L263.74 615.74M266.32 615.73L266.32 614.67M268.16 616.49L268.91 615.74" stroke="#f8cf6c" stroke-width="0.48" fill="none"/><rect x="323" y="613.5" width="11.5" height="9.0" fill="#f7cb66"/><path d="M330.2 613.5V612.1A3.1 3.1 0 0 1 336.4 612.1V614.0" fill="none" stroke="#f7cb66" stroke-width="2.0"/><rect x="327.8" y="616.5" width="2.0" height="3.5" fill="#3b4453"/><rect x="350" y="607.5" width="8" height="4" fill="#f2f2f2"/><rect x="346" y="611.5" width="16" height="7" rx="1" fill="#e0e0e0"/><rect x="350" y="616.5" width="8" height="6.500" fill="#62b4f2" stroke="#f2f2f2" stroke-width="1"/><rect x="369.500" y="608.5" width="14" height="14" fill="#000000" stroke="#d8d8d8" stroke-width="1"/><rect x="429.500" y="608.5" width="14" height="14" fill="#000000" stroke="#d8d8d8" stroke-width="1"/><path d="M53.500 634.4H62L56.500 640.8H48Z" fill="#d8d8d8"/><path d="M165.70 636.00a5.60 5.60 0 1 1 11.20 0c0 2.60 -3.20 3.40 -3.20 5.00h-4.80c0 -1.60 -3.20 -2.40 -3.20 -5.00z" fill="#fcd074"/><path d="M169.00 641.50h4.60v1.80a2.30 2.00 0 0 1 -4.60 0z" fill="#ececec"/><circle cx="194.4" cy="637.3" r="4.60" fill="#fcd074"/><path d="M200.30 637.30L202.70 637.30M198.57 641.47L200.27 643.17M194.40 643.20L194.40 645.60M190.23 641.47L188.53 643.17M188.50 637.30L186.10 637.30M190.23 633.13L188.53 631.43M194.40 631.40L194.40 629.00M198.57 633.13L200.27 631.43" stroke="#fcd074" stroke-width="1.10" fill="none"/><g fill="none" stroke="#d4d4d4" stroke-width="0.97"><path d="M255.5 634.02V630.5H259.02M265.18 630.5H268.7V634.02M255.5 639.3V642.82H259.02"/><rect x="257.964" y="632.964" width="8.272" height="7.392" fill="#5c6576" stroke="#a8acb4"/></g><circle cx="266.324" cy="641.324" r="2.02" fill="#f8cf6c"/><path d="M268.92 641.32L269.98 641.32M268.16 643.16L268.91 643.91M266.32 643.92L266.32 644.98M264.49 643.16L263.74 643.91M263.73 641.32L262.67 641.32M264.49 639.49L263.74 638.74M266.32 638.73L266.32 637.67M268.16 639.49L268.91 638.74" stroke="#f8cf6c" stroke-width="0.48" fill="none"/><rect x="323" y="636.5" width="11.5" height="9.0" fill="#f7cb66"/><path d="M330.2 636.5V635.1A3.1 3.1 0 0 1 336.4 635.1V637.0" fill="none" stroke="#f7cb66" stroke-width="2.0"/><rect x="327.8" y="639.5" width="2.0" height="3.5" fill="#3b4453"/><rect x="350" y="630.5" width="8" height="4" fill="#f2f2f2"/><rect x="346" y="634.5" width="16" height="7" rx="1" fill="#e0e0e0"/><rect x="350" y="639.5" width="8" height="6.500" fill="#62b4f2" stroke="#f2f2f2" stroke-width="1"/><rect x="369.500" y="631.5" width="14" height="14" fill="#000000" stroke="#d8d8d8" stroke-width="1"/><rect x="429.500" y="631.5" width="14" height="14" fill="#000000" stroke="#d8d8d8" stroke-width="1"/><path d="M53.500 657.4H62L56.500 663.8H48Z" fill="#d8d8d8"/><path d="M165.70 659.00a5.60 5.60 0 1 1 11.20 0c0 2.60 -3.20 3.40 -3.20 5.00h-4.80c0 -1.60 -3.20 -2.40 -3.20 -5.00z" fill="#fcd074"/><path d="M169.00 664.50h4.60v1.80a2.30 2.00 0 0 1 -4.60 0z" fill="#ececec"/><circle cx="194.4" cy="660.3" r="4.60" fill="#fcd074"/><path d="M200.30 660.30L202.70 660.30M198.57 664.47L200.27 666.17M194.40 666.20L194.40 668.60M190.23 664.47L188.53 666.17M188.50 660.30L186.10 660.30M190.23 656.13L188.53 654.43M194.40 654.40L194.40 652.00M198.57 656.13L200.27 654.43" stroke="#fcd074" stroke-width="1.10" fill="none"/><g fill="none" stroke="#d4d4d4" stroke-width="0.97"><path d="M255.5 657.02V653.5H259.02M265.18 653.5H268.7V657.02M255.5 662.3V665.82H259.02"/><rect x="257.964" y="655.964" width="8.272" height="7.392" fill="#5c6576" stroke="#a8acb4"/></g><circle cx="266.324" cy="664.324" r="2.02" fill="#f8cf6c"/><path d="M268.92 664.32L269.98 664.32M268.16 666.16L268.91 666.91M266.32 666.92L266.32 667.98M264.49 666.16L263.74 666.91M263.73 664.32L262.67 664.32M264.49 662.49L263.74 661.74M266.32 661.73L266.32 660.67M268.16 662.49L268.91 661.74" stroke="#f8cf6c" stroke-width="0.48" fill="none"/><rect x="323" y="659.5" width="11.5" height="9.0" fill="#f7cb66"/><path d="M330.2 659.5V658.1A3.1 3.1 0 0 1 336.4 658.1V660.0" fill="none" stroke="#f7cb66" stroke-width="2.0"/><rect x="327.8" y="662.5" width="2.0" height="3.5" fill="#3b4453"/><rect x="350" y="653.5" width="8" height="4" fill="#f2f2f2"/><rect x="346" y="657.5" width="16" height="7" rx="1" fill="#e0e0e0"/><rect x="350" y="662.5" width="8" height="6.500" fill="#62b4f2" stroke="#f2f2f2" stroke-width="1"/><rect x="369.500" y="654.5" width="14" height="14" fill="#000000" stroke="#d8d8d8" stroke-width="1"/><rect x="429.500" y="654.5" width="14" height="14" fill="#000000" stroke="#d8d8d8" stroke-width="1"/><path d="M53.500 680.4H62L56.500 686.8H48Z" fill="#d8d8d8"/><path d="M165.70 682.00a5.60 5.60 0 1 1 11.20 0c0 2.60 -3.20 3.40 -3.20 5.00h-4.80c0 -1.60 -3.20 -2.40 -3.20 -5.00z" fill="#fcd074"/><path d="M169.00 687.50h4.60v1.80a2.30 2.00 0 0 1 -4.60 0z" fill="#ececec"/><circle cx="194.4" cy="683.3" r="4.60" fill="#fcd074"/><path d="M200.30 683.30L202.70 683.30M198.57 687.47L200.27 689.17M194.40 689.20L194.40 691.60M190.23 687.47L188.53 689.17M188.50 683.30L186.10 683.30M190.23 679.13L188.53 677.43M194.40 677.40L194.40 675.00M198.57 679.13L200.27 677.43" stroke="#fcd074" stroke-width="1.10" fill="none"/><g fill="none" stroke="#d4d4d4" stroke-width="0.97"><path d="M255.5 680.02V676.5H259.02M265.18 676.5H268.7V680.02M255.5 685.3V688.82H259.02"/><rect x="257.964" y="678.964" width="8.272" height="7.392" fill="#5c6576" stroke="#a8acb4"/></g><circle cx="266.324" cy="687.324" r="2.02" fill="#f8cf6c"/><path d="M268.92 687.32L269.98 687.32M268.16 689.16L268.91 689.91M266.32 689.92L266.32 690.98M264.49 689.16L263.74 689.91M263.73 687.32L262.67 687.32M264.49 685.49L263.74 684.74M266.32 684.73L266.32 683.67M268.16 685.49L268.91 684.74" stroke="#f8cf6c" stroke-width="0.48" fill="none"/><rect x="323" y="682.5" width="11.5" height="9.0" fill="#f7cb66"/><path d="M330.2 682.5V681.1A3.1 3.1 0 0 1 336.4 681.1V683.0" fill="none" stroke="#f7cb66" stroke-width="2.0"/><rect x="327.8" y="685.5" width="2.0" height="3.5" fill="#3b4453"/><rect x="350" y="676.5" width="8" height="4" fill="#f2f2f2"/><rect x="346" y="680.5" width="16" height="7" rx="1" fill="#e0e0e0"/><rect x="350" y="685.5" width="8" height="6.500" fill="#62b4f2" stroke="#f2f2f2" stroke-width="1"/><rect x="369.500" y="677.5" width="14" height="14" fill="#000000" stroke="#d8d8d8" stroke-width="1"/><rect x="429.500" y="677.5" width="14" height="14" fill="#000000" stroke="#d8d8d8" stroke-width="1"/><path d="M53.500 703.4H62L56.500 709.8H48Z" fill="#d8d8d8"/><path d="M165.70 705.00a5.60 5.60 0 1 1 11.20 0c0 2.60 -3.20 3.40 -3.20 5.00h-4.80c0 -1.60 -3.20 -2.40 -3.20 -5.00z" fill="#fcd074"/><path d="M169.00 710.50h4.60v1.80a2.30 2.00 0 0 1 -4.60 0z" fill="#ececec"/><circle cx="194.4" cy="706.3" r="4.60" fill="#fcd074"/><path d="M200.30 706.30L202.70 706.30M198.57 710.47L200.27 712.17M194.40 712.20L194.40 714.60M190.23 710.47L188.53 712.17M188.50 706.30L186.10 706.30M190.23 702.13L188.53 700.43M194.40 700.40L194.40 698.00M198.57 702.13L200.27 700.43" stroke="#fcd074" stroke-width="1.10" fill="none"/><g fill="none" stroke="#d4d4d4" stroke-width="0.97"><path d="M255.5 703.02V699.5H259.02M265.18 699.5H268.7V703.02M255.5 708.3V711.82H259.02"/><rect x="257.964" y="701.964" width="8.272" height="7.392" fill="#5c6576" stroke="#a8acb4"/></g><circle cx="266.324" cy="710.324" r="2.02" fill="#f8cf6c"/><path d="M268.92 710.32L269.98 710.32M268.16 712.16L268.91 712.91M266.32 712.92L266.32 713.98M264.49 712.16L263.74 712.91M263.73 710.32L262.67 710.32M264.49 708.49L263.74 707.74M266.32 707.73L266.32 706.67M268.16 708.49L268.91 707.74" stroke="#f8cf6c" stroke-width="0.48" fill="none"/><rect x="323" y="705.5" width="11.5" height="9.0" fill="#f7cb66"/><path d="M330.2 705.5V704.1A3.1 3.1 0 0 1 336.4 704.1V706.0" fill="none" stroke="#f7cb66" stroke-width="2.0"/><rect x="327.8" y="708.5" width="2.0" height="3.5" fill="#3b4453"/><rect x="350" y="699.5" width="8" height="4" fill="#f2f2f2"/><rect x="346" y="703.5" width="16" height="7" rx="1" fill="#e0e0e0"/><rect x="350" y="708.5" width="8" height="6.500" fill="#62b4f2" stroke="#f2f2f2" stroke-width="1"/><rect x="369.500" y="700.5" width="14" height="14" fill="#545454" stroke="#d8d8d8" stroke-width="1"/><rect x="429.500" y="700.5" width="14" height="14" fill="#545454" stroke="#d8d8d8" stroke-width="1"/><path d="M53.500 726.4H62L56.500 732.8H48Z" fill="#d8d8d8"/><path d="M165.70 728.00a5.60 5.60 0 1 1 11.20 0c0 2.60 -3.20 3.40 -3.20 5.00h-4.80c0 -1.60 -3.20 -2.40 -3.20 -5.00z" fill="#fcd074"/><path d="M169.00 733.50h4.60v1.80a2.30 2.00 0 0 1 -4.60 0z" fill="#ececec"/><circle cx="194.4" cy="729.3" r="4.60" fill="#fcd074"/><path d="M200.30 729.30L202.70 729.30M198.57 733.47L200.27 735.17M194.40 735.20L194.40 737.60M190.23 733.47L188.53 735.17M188.50 729.30L186.10 729.30M190.23 725.13L188.53 723.43M194.40 723.40L194.40 721.00M198.57 725.13L200.27 723.43" stroke="#fcd074" stroke-width="1.10" fill="none"/><g fill="none" stroke="#d4d4d4" stroke-width="0.97"><path d="M255.5 726.02V722.5H259.02M265.18 722.5H268.7V726.02M255.5 731.3V734.82H259.02"/><rect x="257.964" y="724.964" width="8.272" height="7.392" fill="#5c6576" stroke="#a8acb4"/></g><circle cx="266.324" cy="733.324" r="2.02" fill="#f8cf6c"/><path d="M268.92 733.32L269.98 733.32M268.16 735.16L268.91 735.91M266.32 735.92L266.32 736.98M264.49 735.16L263.74 735.91M263.73 733.32L262.67 733.32M264.49 731.49L263.74 730.74M266.32 730.73L266.32 729.67M268.16 731.49L268.91 730.74" stroke="#f8cf6c" stroke-width="0.48" fill="none"/><rect x="323" y="728.5" width="11.5" height="9.0" fill="#f7cb66"/><path d="M330.2 728.5V727.1A3.1 3.1 0 0 1 336.4 727.1V729.0" fill="none" stroke="#f7cb66" stroke-width="2.0"/><rect x="327.8" y="731.5" width="2.0" height="3.5" fill="#3b4453"/><rect x="350" y="722.5" width="8" height="4" fill="#f2f2f2"/><rect x="346" y="726.5" width="16" height="7" rx="1" fill="#e0e0e0"/><rect x="350" y="731.5" width="8" height="6.500" fill="#62b4f2" stroke="#f2f2f2" stroke-width="1"/><rect x="369.500" y="723.5" width="14" height="14" fill="#a67b4f" stroke="#d8d8d8" stroke-width="1"/><rect x="429.500" y="723.5" width="14" height="14" fill="#a67b4f" stroke="#d8d8d8" stroke-width="1"/><path d="M53.500 749.4H62L56.500 755.8H48Z" fill="#d8d8d8"/><path d="M165.70 751.00a5.60 5.60 0 1 1 11.20 0c0 2.60 -3.20 3.40 -3.20 5.00h-4.80c0 -1.60 -3.20 -2.40 -3.20 -5.00z" fill="#fcd074"/><path d="M169.00 756.50h4.60v1.80a2.30 2.00 0 0 1 -4.60 0z" fill="#ececec"/><circle cx="194.4" cy="752.3" r="4.60" fill="#fcd074"/><path d="M200.30 752.30L202.70 752.30M198.57 756.47L200.27 758.17M194.40 758.20L194.40 760.60M190.23 756.47L188.53 758.17M188.50 752.30L186.10 752.30M190.23 748.13L188.53 746.43M194.40 746.40L194.40 744.00M198.57 748.13L200.27 746.43" stroke="#fcd074" stroke-width="1.10" fill="none"/><g fill="none" stroke="#d4d4d4" stroke-width="0.97"><path d="M255.5 749.02V745.5H259.02M265.18 745.5H268.7V749.02M255.5 754.3V757.82H259.02"/><rect x="257.964" y="747.964" width="8.272" height="7.392" fill="#5c6576" stroke="#a8acb4"/></g><circle cx="266.324" cy="756.324" r="2.02" fill="#f8cf6c"/><path d="M268.92 756.32L269.98 756.32M268.16 758.16L268.91 758.91M266.32 758.92L266.32 759.98M264.49 758.16L263.74 758.91M263.73 756.32L262.67 756.32M264.49 754.49L263.74 753.74M266.32 753.73L266.32 752.67M268.16 754.49L268.91 753.74" stroke="#f8cf6c" stroke-width="0.48" fill="none"/><rect x="323" y="751.5" width="11.5" height="9.0" fill="#f7cb66"/><path d="M330.2 751.5V750.1A3.1 3.1 0 0 1 336.4 750.1V752.0" fill="none" stroke="#f7cb66" stroke-width="2.0"/><rect x="327.8" y="754.5" width="2.0" height="3.5" fill="#3b4453"/><rect x="350" y="745.5" width="8" height="4" fill="#f2f2f2"/><rect x="346" y="749.5" width="16" height="7" rx="1" fill="#e0e0e0"/><rect x="350" y="754.5" width="8" height="6.500" fill="#62b4f2" stroke="#f2f2f2" stroke-width="1"/><rect x="369.500" y="746.5" width="14" height="14" fill="#a67b4f" stroke="#d8d8d8" stroke-width="1"/><rect x="429.500" y="746.5" width="14" height="14" fill="#a67b4f" stroke="#d8d8d8" stroke-width="1"/><path d="M53.500 772.4H62L56.500 778.8H48Z" fill="#d8d8d8"/><path d="M165.70 774.00a5.60 5.60 0 1 1 11.20 0c0 2.60 -3.20 3.40 -3.20 5.00h-4.80c0 -1.60 -3.20 -2.40 -3.20 -5.00z" fill="#fcd074"/><path d="M169.00 779.50h4.60v1.80a2.30 2.00 0 0 1 -4.60 0z" fill="#ececec"/><circle cx="194.4" cy="775.3" r="4.60" fill="#fcd074"/><path d="M200.30 775.30L202.70 775.30M198.57 779.47L200.27 781.17M194.40 781.20L194.40 783.60M190.23 779.47L188.53 781.17M188.50 775.30L186.10 775.30M190.23 771.13L188.53 769.43M194.40 769.40L194.40 767.00M198.57 771.13L200.27 769.43" stroke="#fcd074" stroke-width="1.10" fill="none"/><g fill="none" stroke="#d4d4d4" stroke-width="0.97"><path d="M255.5 772.02V768.5H259.02M265.18 768.5H268.7V772.02M255.5 777.3V780.82H259.02"/><rect x="257.964" y="770.964" width="8.272" height="7.392" fill="#5c6576" stroke="#a8acb4"/></g><circle cx="266.324" cy="779.324" r="2.02" fill="#f8cf6c"/><path d="M268.92 779.32L269.98 779.32M268.16 781.16L268.91 781.91M266.32 781.92L266.32 782.98M264.49 781.16L263.74 781.91M263.73 779.32L262.67 779.32M264.49 777.49L263.74 776.74M266.32 776.73L266.32 775.67M268.16 777.49L268.91 776.74" stroke="#f8cf6c" stroke-width="0.48" fill="none"/><rect x="323" y="774.5" width="11.5" height="9.0" fill="#f7cb66"/><path d="M330.2 774.5V773.1A3.1 3.1 0 0 1 336.4 773.1V775.0" fill="none" stroke="#f7cb66" stroke-width="2.0"/><rect x="327.8" y="777.5" width="2.0" height="3.5" fill="#3b4453"/><rect x="350" y="768.5" width="8" height="4" fill="#f2f2f2"/><rect x="346" y="772.5" width="16" height="7" rx="1" fill="#e0e0e0"/><rect x="350" y="777.5" width="8" height="6.500" fill="#62b4f2" stroke="#f2f2f2" stroke-width="1"/><rect x="369.500" y="769.5" width="14" height="14" fill="#000000" stroke="#d8d8d8" stroke-width="1"/><rect x="429.500" y="769.5" width="14" height="14" fill="#000000" stroke="#d8d8d8" stroke-width="1"/><path d="M53.500 795.4H62L56.500 801.8H48Z" fill="#d8d8d8"/><path d="M165.70 797.00a5.60 5.60 0 1 1 11.20 0c0 2.60 -3.20 3.40 -3.20 5.00h-4.80c0 -1.60 -3.20 -2.40 -3.20 -5.00z" fill="#fcd074"/><path d="M169.00 802.50h4.60v1.80a2.30 2.00 0 0 1 -4.60 0z" fill="#ececec"/><circle cx="194.4" cy="798.3" r="4.60" fill="#fcd074"/><path d="M200.30 798.30L202.70 798.30M198.57 802.47L200.27 804.17M194.40 804.20L194.40 806.60M190.23 802.47L188.53 804.17M188.50 798.30L186.10 798.30M190.23 794.13L188.53 792.43M194.40 792.40L194.40 790.00M198.57 794.13L200.27 792.43" stroke="#fcd074" stroke-width="1.10" fill="none"/><g fill="none" stroke="#d4d4d4" stroke-width="0.97"><path d="M255.5 795.02V791.5H259.02M265.18 791.5H268.7V795.02M255.5 800.3V803.82H259.02"/><rect x="257.964" y="793.964" width="8.272" height="7.392" fill="#5c6576" stroke="#a8acb4"/></g><circle cx="266.324" cy="802.324" r="2.02" fill="#f8cf6c"/><path d="M268.92 802.32L269.98 802.32M268.16 804.16L268.91 804.91M266.32 804.92L266.32 805.98M264.49 804.16L263.74 804.91M263.73 802.32L262.67 802.32M264.49 800.49L263.74 799.74M266.32 799.73L266.32 798.67M268.16 800.49L268.91 799.74" stroke="#f8cf6c" stroke-width="0.48" fill="none"/><rect x="323" y="797.5" width="11.5" height="9.0" fill="#f7cb66"/><path d="M330.2 797.5V796.1A3.1 3.1 0 0 1 336.4 796.1V798.0" fill="none" stroke="#f7cb66" stroke-width="2.0"/><rect x="327.8" y="800.5" width="2.0" height="3.5" fill="#3b4453"/><rect x="350" y="791.5" width="8" height="4" fill="#f2f2f2"/><rect x="346" y="795.5" width="16" height="7" rx="1" fill="#e0e0e0"/><rect x="350" y="800.5" width="8" height="6.500" fill="#62b4f2" stroke="#f2f2f2" stroke-width="1"/><rect x="369.500" y="792.5" width="14" height="14" fill="#a67b4f" stroke="#d8d8d8" stroke-width="1"/><rect x="429.500" y="792.5" width="14" height="14" fill="#a67b4f" stroke="#d8d8d8" stroke-width="1"/><path d="M53.500 818.4H62L56.500 824.8H48Z" fill="#d8d8d8"/><path d="M165.70 820.00a5.60 5.60 0 1 1 11.20 0c0 2.60 -3.20 3.40 -3.20 5.00h-4.80c0 -1.60 -3.20 -2.40 -3.20 -5.00z" fill="#fcd074"/><path d="M169.00 825.50h4.60v1.80a2.30 2.00 0 0 1 -4.60 0z" fill="#ececec"/><circle cx="194.4" cy="821.3" r="4.60" fill="#fcd074"/><path d="M200.30 821.30L202.70 821.30M198.57 825.47L200.27 827.17M194.40 827.20L194.40 829.60M190.23 825.47L188.53 827.17M188.50 821.30L186.10 821.30M190.23 817.13L188.53 815.43M194.40 815.40L194.40 813.00M198.57 817.13L200.27 815.43" stroke="#fcd074" stroke-width="1.10" fill="none"/><g fill="none" stroke="#d4d4d4" stroke-width="0.97"><path d="M255.5 818.02V814.5H259.02M265.18 814.5H268.7V818.02M255.5 823.3V826.82H259.02"/><rect x="257.964" y="816.964" width="8.272" height="7.392" fill="#5c6576" stroke="#a8acb4"/></g><circle cx="266.324" cy="825.324" r="2.02" fill="#f8cf6c"/><path d="M268.92 825.32L269.98 825.32M268.16 827.16L268.91 827.91M266.32 827.92L266.32 828.98M264.49 827.16L263.74 827.91M263.73 825.32L262.67 825.32M264.49 823.49L263.74 822.74M266.32 822.73L266.32 821.67M268.16 823.49L268.91 822.74" stroke="#f8cf6c" stroke-width="0.48" fill="none"/><rect x="323" y="820.5" width="11.5" height="9.0" fill="#f7cb66"/><path d="M330.2 820.5V819.1A3.1 3.1 0 0 1 336.4 819.1V821.0" fill="none" stroke="#f7cb66" stroke-width="2.0"/><rect x="327.8" y="823.5" width="2.0" height="3.5" fill="#3b4453"/><rect x="350" y="814.5" width="8" height="4" fill="#f2f2f2"/><rect x="346" y="818.5" width="16" height="7" rx="1" fill="#e0e0e0"/><rect x="350" y="823.5" width="8" height="6.500" fill="#62b4f2" stroke="#f2f2f2" stroke-width="1"/><rect x="369.500" y="815.5" width="14" height="14" fill="#000000" stroke="#d8d8d8" stroke-width="1"/><rect x="429.500" y="815.5" width="14" height="14" fill="#000000" stroke="#d8d8d8" stroke-width="1"/><path d="M53.500 841.4H62L56.500 847.8H48Z" fill="#d8d8d8"/><path d="M165.70 843.00a5.60 5.60 0 1 1 11.20 0c0 2.60 -3.20 3.40 -3.20 5.00h-4.80c0 -1.60 -3.20 -2.40 -3.20 -5.00z" fill="#fcd074"/><path d="M169.00 848.50h4.60v1.80a2.30 2.00 0 0 1 -4.60 0z" fill="#ececec"/><circle cx="194.4" cy="844.3" r="4.60" fill="#fcd074"/><path d="M200.30 844.30L202.70 844.30M198.57 848.47L200.27 850.17M194.40 850.20L194.40 852.60M190.23 848.47L188.53 850.17M188.50 844.30L186.10 844.30M190.23 840.13L188.53 838.43M194.40 838.40L194.40 836.00M198.57 840.13L200.27 838.43" stroke="#fcd074" stroke-width="1.10" fill="none"/><g fill="none" stroke="#d4d4d4" stroke-width="0.97"><path d="M255.5 841.02V837.5H259.02M265.18 837.5H268.7V841.02M255.5 846.3V849.82H259.02"/><rect x="257.964" y="839.964" width="8.272" height="7.392" fill="#5c6576" stroke="#a8acb4"/></g><circle cx="266.324" cy="848.324" r="2.02" fill="#f8cf6c"/><path d="M268.92 848.32L269.98 848.32M268.16 850.16L268.91 850.91M266.32 850.92L266.32 851.98M264.49 850.16L263.74 850.91M263.73 848.32L262.67 848.32M264.49 846.49L263.74 845.74M266.32 845.73L266.32 844.67M268.16 846.49L268.91 845.74" stroke="#f8cf6c" stroke-width="0.48" fill="none"/><rect x="323" y="843.5" width="11.5" height="9.0" fill="#f7cb66"/><path d="M330.2 843.5V842.1A3.1 3.1 0 0 1 336.4 842.1V844.0" fill="none" stroke="#f7cb66" stroke-width="2.0"/><rect x="327.8" y="846.5" width="2.0" height="3.5" fill="#3b4453"/><rect x="350" y="837.5" width="8" height="4" fill="#f2f2f2"/><rect x="346" y="841.5" width="16" height="7" rx="1" fill="#e0e0e0"/><rect x="350" y="846.5" width="8" height="6.500" fill="#62b4f2" stroke="#f2f2f2" stroke-width="1"/><rect x="369.500" y="838.5" width="14" height="14" fill="#545454" stroke="#d8d8d8" stroke-width="1"/><rect x="429.500" y="838.5" width="14" height="14" fill="#545454" stroke="#d8d8d8" stroke-width="1"/><path d="M53.500 864.4H62L56.500 870.8H48Z" fill="#d8d8d8"/><path d="M165.70 866.00a5.60 5.60 0 1 1 11.20 0c0 2.60 -3.20 3.40 -3.20 5.00h-4.80c0 -1.60 -3.20 -2.40 -3.20 -5.00z" fill="#fcd074"/><path d="M169.00 871.50h4.60v1.80a2.30 2.00 0 0 1 -4.60 0z" fill="#ececec"/><circle cx="194.4" cy="867.3" r="4.60" fill="#fcd074"/><path d="M200.30 867.30L202.70 867.30M198.57 871.47L200.27 873.17M194.40 873.20L194.40 875.60M190.23 871.47L188.53 873.17M188.50 867.30L186.10 867.30M190.23 863.13L188.53 861.43M194.40 861.40L194.40 859.00M198.57 863.13L200.27 861.43" stroke="#fcd074" stroke-width="1.10" fill="none"/><g fill="none" stroke="#d4d4d4" stroke-width="0.97"><path d="M255.5 864.02V860.5H259.02M265.18 860.5H268.7V864.02M255.5 869.3V872.82H259.02"/><rect x="257.964" y="862.964" width="8.272" height="7.392" fill="#5c6576" stroke="#a8acb4"/></g><circle cx="266.324" cy="871.324" r="2.02" fill="#f8cf6c"/><path d="M268.92 871.32L269.98 871.32M268.16 873.16L268.91 873.91M266.32 873.92L266.32 874.98M264.49 873.16L263.74 873.91M263.73 871.32L262.67 871.32M264.49 869.49L263.74 868.74M266.32 868.73L266.32 867.67M268.16 869.49L268.91 868.74" stroke="#f8cf6c" stroke-width="0.48" fill="none"/><rect x="323" y="866.5" width="11.5" height="9.0" fill="#f7cb66"/><path d="M330.2 866.5V865.1A3.1 3.1 0 0 1 336.4 865.1V867.0" fill="none" stroke="#f7cb66" stroke-width="2.0"/><rect x="327.8" y="869.5" width="2.0" height="3.5" fill="#3b4453"/><rect x="350" y="860.5" width="8" height="4" fill="#f2f2f2"/><rect x="346" y="864.5" width="16" height="7" rx="1" fill="#e0e0e0"/><rect x="350" y="869.5" width="8" height="6.500" fill="#62b4f2" stroke="#f2f2f2" stroke-width="1"/><rect x="369.500" y="861.5" width="14" height="14" fill="#000000" stroke="#d8d8d8" stroke-width="1"/><rect x="429.500" y="861.5" width="14" height="14" fill="#000000" stroke="#d8d8d8" stroke-width="1"/></svg>
<div style="left:44px;top:903px;width:396px;height:21px;background:#f0f0f0;"></div>
<div style="left:65px;top:912px;width:91px;height:2px;background:#8a8a8a;"></div>
<svg style="left:7px;top:945px;" width="30" height="18" viewBox="0 0 30 18"><path d="M1 15V1H8.14L9.84 3.5H18V15Z" fill="#c8c8c8"/><path d="M13 8l-4 6h3l-1.500 5l5.500-7h-3l2-4z" fill="#f0b840" stroke="#3b4453" stroke-width="0.600"/></svg>
<svg style="left:30.6px;top:952px;" width="8" height="4.5" viewBox="0 0 8 4.5"><path d="M0 0H8L4.0 4.5Z" fill="#dcdcdc"/></svg>
<span class="t" style="left:49.2px;top:946px;font-size:15px;color:#ececec;letter-spacing:-0.049px;">All: 21 layers displayed of 21 total layers</span>
<svg style="left:433px;top:965px;" width="8" height="8" viewBox="0 0 8 8"><path d="M7 1L1 7M7 4.500L4.500 7" stroke="#586274" stroke-width="1"/></svg>
<div style="left:446px;top:226px;width:1468px;height:749px;background:#8b8b8b;"></div>
<div style="left:928px;top:246px;width:504px;height:709px;background:#ffffff;box-sizing:border-box;border:3px solid #ff7f00;box-shadow:0 0 5px 1px rgba(60,60,60,0.55)"></div>
<svg id="map" style="left:931px;top:249px;position:absolute;overflow:hidden" width="498" height="703" viewBox="931 249 498 703"><g fill="none" stroke-linejoin="round"><path d="M1016.1 252.3L1019.5 251.1L1048.8 251.1L1054.0 258.3L1057.4 282.4M1014.4 302.8L1021.3 298.3L1052.2 297.6L1060.9 299.7M1022.1 347.5L1028.1 344.4L1054.8 343.0L1061.7 347.5L1065.2 347.5M1021.3 399.5L1026.4 398.7L1031.6 392.3L1057.4 393.5L1064.3 399.5L1070.3 399.9M1152.1 283.3L1160.7 296.2L1164.2 316.9M1152.1 351.3L1146.9 378.9M1038.5 440.4L1060.9 436.9L1070.3 442.1M1004.9 502.3L1026.4 492.0L1037.6 487.4L1064.3 489.4L1071.2 496.3L1073.8 527.3M1004.9 502.3L1015.2 535.9M1033.3 542.8L1041.9 535.1L1072.9 531.6M1048.8 582.4L1054.0 579.8L1081.5 575.9L1085.8 576.4M1157.3 518.7L1180.0 516.1M1088.4 579.8L1095.3 591.9M1310.0 577.2L1304.0 592.7L1293.6 600.0M1349.6 461.0L1353.0 467.0L1353.0 499.8L1350.5 504.1M1186.0 467.0L1193.8 480.8L1195.5 498.9M1060.9 619.8L1066.0 617.2L1090.1 616.4L1097.0 618.1M1061.7 695.6L1067.7 700.7L1078.1 701.6L1109.1 699.5L1115.1 700.2L1122.8 699.5M1140.1 714.5L1141.8 720.5L1141.4 737.7M1081.5 753.2L1085.8 750.1L1117.7 749.4L1122.8 752.4M930.0 740.3L941.2 739.1L950.7 762.7L955.8 766.7M1180.0 626.7L1202.4 627.5M1180.0 668.9L1204.1 667.1M1293.6 600.0L1279.9 618.9L1265.2 641.0M1218.7 720.5L1219.9 737.7M1262.6 720.9L1262.6 742.9M1303.1 720.5L1306.5 725.7L1306.5 744.6M1336.7 721.4L1341.0 727.4L1341.0 744.6M1354.8 722.6L1359.9 727.4M1391.8 725.7L1390.9 748.1M1247.1 764.4L1266.1 764.4L1273.0 766.2M1247.1 764.4L1242.8 767.9M1086.7 793.2L1091.8 788.4L1121.1 786.3L1130.6 789.4M1091.0 832.0L1099.6 825.1L1124.6 823.3L1134.9 828.5M1102.2 926.7L1110.8 921.1L1134.9 918.9L1142.6 920.6M1254.0 839.7L1258.3 836.6L1281.6 837.1M1260.1 886.2L1265.2 883.1L1281.6 882.4L1286.4 884.5M1266.1 937.0L1271.3 933.5L1290.2 933.0L1297.1 934.4M1315.2 841.1L1324.6 874.1L1328.9 896.5L1329.4 914.6" stroke="#555" stroke-width="0.7"/><path d="M930.0 293.1L959.3 269.5L972.2 264.4L1010.9 263.2M972.2 264.4L972.2 282.4L947.2 285.9L968.7 341.8M958.4 313.1L1015.2 303.4M930.0 337.0L961.0 323.8M968.7 341.8L1017.8 333.7L1025.6 368.5L930.0 397.8M930.0 359.9L968.7 341.8M937.7 358.2L952.4 424.0M953.2 423.3L1029.9 405.5L1033.3 424.0M1019.5 372.0L1023.8 424.0M1019.5 407.3L1029.9 405.5M1009.5 248.0L1014.4 303.1L1017.8 334.1L1019.5 372.0M1019.5 248.0L1023.8 297.9L1029.0 344.4L1033.3 390.9L1035.4 424.0M1050.5 248.0L1053.1 297.9L1055.7 344.4L1058.3 392.6L1059.1 424.0M1053.1 251.4L1060.9 299.7L1066.0 328.9L1065.2 330.6L1066.0 342.4L1067.7 384.9L1070.3 424.0M1065.2 318.6L1094.4 314.3L1117.7 322.9L1119.4 336.7L1066.0 342.4M1094.4 314.3L1076.3 275.5L1057.4 284.5M1076.3 275.5L1081.5 272.1L1079.8 264.4L1067.7 250.6M1076.3 248.0L1089.3 276.4L1121.5 269.5L1115.6 248.0M1119.4 336.7L1126.3 378.0L1067.7 385.2M1126.3 378.0L1130.6 403.8L1070.3 410.2M1130.6 403.8L1134.0 424.0M1150.4 248.0L1168.5 283.3L1174.5 316.9L1180.0 344.4M1171.0 248.0L1174.5 281.6L1180.0 281.6M1168.5 283.3L1180.0 282.4M1107.3 307.4L1106.5 318.6M1137.5 321.2L1154.7 318.6L1155.6 339.3L1138.3 341.8L1137.5 321.2L1155.6 339.3M1154.7 318.6L1138.3 341.8M1154.7 314.3L1159.0 312.6L1165.0 334.1L1157.3 334.9L1154.7 314.3L1165.0 334.1M1159.0 312.6L1157.3 334.9M1153.8 337.5L1176.2 334.1L1178.8 366.8L1155.6 367.7L1153.8 337.5M1153.8 337.5L1177.6 351.3L1155.6 367.7M1176.2 334.1L1154.7 352.2L1178.8 366.8M1154.7 352.2L1177.6 351.3M1137.5 368.5L1155.6 366.8L1157.3 385.7L1139.2 388.3L1137.5 368.5L1157.3 385.7M1155.6 366.8L1139.2 388.3M1155.6 367.7L1178.8 366.8L1180.0 384.9L1157.3 385.7M1155.6 367.7L1180.0 384.9M1178.8 366.8L1157.3 385.7M1139.2 388.3L1143.5 424.0M1143.5 406.4L1180.0 403.0M1143.5 412.4L1164.2 410.7L1165.0 424.0M1224.4 248.0L1225.6 263.5L1233.4 349.6L1240.3 424.0M1234.8 248.0L1235.6 263.2M1225.6 263.8L1260.1 262.3L1265.2 347.9L1267.8 399.5M1180.0 282.4L1226.5 278.1M1180.0 346.5L1232.5 343.0M1233.4 350.4L1265.2 347.9M1265.2 342.4L1287.6 341.5M1280.7 248.0L1287.6 341.0L1294.5 424.0M1238.5 402.4L1274.7 399.2L1276.4 424.0M1180.0 385.4L1229.9 383.2M1180.0 346.1L1189.5 346.1L1192.9 384.9M1180.0 351.3L1192.1 384.0M1189.5 346.5L1180.0 377.1M1410.7 248.0L1393.5 403.0L1391.8 424.0M1430.0 277.3L1421.0 337.5L1410.7 424.0M1421.0 337.5L1430.0 340.1M1345.3 404.3L1393.5 402.1M1345.3 404.3L1342.7 424.0M930.0 430.5L953.2 424.0M957.5 424.0L962.7 446.7M930.0 455.0L1032.4 430.5M1023.8 424.0L1025.6 431.7M946.4 451.5L953.2 480.0M930.0 484.3L953.2 479.4M1032.4 424.0L1034.7 459.3L1025.6 461.5L1026.8 488.6L930.0 516.1M930.0 522.1L1031.6 493.2L1037.6 488.6L1041.6 479.1L1042.8 468.8L1037.6 424.0M930.0 549.7L1012.6 526.4L1028.1 522.1L1036.7 525.6L1041.9 535.9L1058.3 600.0M930.0 557.4L1004.0 535.9L1021.3 536.8L1033.3 542.8L1040.2 554.9L1052.2 600.0M941.2 554.9L953.2 600.0M1060.0 424.0L1072.9 527.3L1085.8 600.0M1069.5 424.0L1071.2 465.3L1073.8 527.3L1081.5 579.0M1070.3 442.1L1135.8 436.1M1071.2 465.3L1139.2 456.7M1072.9 507.5L1147.8 490.3M1134.0 424.0L1152.1 507.5M1147.8 577.2L1153.8 600.0M1167.6 570.3L1180.0 596.2M1168.5 569.5L1180.0 566.0M1158.1 453.6L1180.0 451.2M1158.1 453.6L1169.3 467.0L1180.0 465.7M1143.5 424.0L1144.4 432.6L1165.0 431.7M1204.1 427.4L1205.8 465.3M1180.0 451.5L1205.0 449.0M1241.1 427.4L1242.3 462.2L1180.0 467.0M1274.7 424.0L1276.4 482.5L1278.1 520.4L1283.3 600.0M1293.6 424.0L1295.0 446.4L1308.3 459.3L1385.8 462.2L1388.3 424.0M1295.0 448.1L1307.4 464.5L1385.8 467.0M1342.7 424.0L1340.1 461.0M1205.5 486.0L1240.3 485.1L1250.2 519.6L1283.0 519.0M1205.5 486.0L1205.8 498.9L1193.4 499.4L1194.6 525.2M1180.0 517.8L1193.8 516.6M1194.6 525.2L1245.4 525.6M1245.4 520.8L1248.9 600.0M1194.6 525.2L1198.1 548.0L1216.2 546.6L1216.5 553.5L1199.8 554.9L1201.5 600.0M1200.7 571.7L1246.3 567.8M1180.0 566.0L1199.8 565.2M1258.3 596.2L1282.4 593.6L1283.3 600.0M1302.2 502.3L1381.4 504.6L1372.0 582.1L1292.8 575.2L1302.2 502.3M1304.0 497.2L1383.2 499.4L1385.8 502.3L1376.3 589.3L1330.7 587.6L1328.1 600.0M1304.0 497.2L1301.9 499.8L1302.2 502.3M1296.2 519.0L1301.4 519.0M1292.8 575.2L1300.5 600.0M1389.2 424.0L1386.6 465.3M1410.7 429.2L1394.4 580.7L1395.2 589.3L1403.8 600.0M1415.0 429.2L1398.7 580.7M1402.1 542.8L1430.0 538.5M1386.6 581.0L1403.8 581.5M1410.7 464.5L1430.0 466.2M1372.0 582.1L1381.4 581.5M955.0 600.0L960.1 624.1M956.7 608.6L992.8 600.9L996.3 614.6M930.0 634.4L1047.1 600.0M973.9 621.5L983.7 659.4L1063.4 637.9M1023.0 607.7L1043.6 695.6M930.0 679.2L946.4 673.7L963.6 724.8M952.4 687.8L1005.8 669.7L1017.5 705.9M930.0 736.9L963.6 724.8L1017.5 705.9L1043.6 695.6M930.0 746.3L1031.6 710.2L1072.9 702.1L1078.4 699.0L1078.9 691.3L1072.9 643.0L1066.0 615.5L1060.9 600.0M1053.1 600.0L1070.3 663.7L1073.8 694.4L1047.1 696.4L1043.6 669.7L1070.3 666.3M1037.6 670.2L1043.6 669.7M1073.8 661.1L1109.1 657.7L1177.1 645.6M1087.5 600.0L1110.8 710.2L1116.0 713.6L1140.1 714.5L1180.0 718.8M1091.8 600.0L1107.3 658.5L1124.6 703.3L1129.7 710.2L1140.1 712.8L1180.0 715.7M1113.4 674.0L1132.3 668.9L1133.2 670.6L1180.0 664.6M1122.8 699.9L1138.3 695.6L1140.1 697.3L1180.0 697.3M1145.2 625.8L1160.4 622.0L1161.6 648.2M1145.2 625.8L1152.1 649.1M1153.8 600.0L1159.9 618.9L1161.6 648.2M1171.0 613.8L1180.0 613.4M1171.0 613.8L1176.2 646.5M1176.2 689.5L1175.4 717.1M1176.2 693.8L1180.0 693.8M1176.2 699.0L1180.0 699.0M1176.2 704.2L1180.0 704.2M1176.2 709.3L1180.0 709.3M930.0 767.0L1023.0 741.2L1076.3 730.9L1083.2 730.5L1088.4 736.0L1090.1 749.8L1092.7 776.0M930.0 773.9L1023.8 747.2L1079.8 738.6L1083.2 776.0M1023.8 747.2L1028.1 776.0M984.2 776.0L1004.0 770.8L1005.8 776.0M1180.0 734.3L1121.1 734.6L1117.7 737.7L1118.5 776.0M1180.0 737.7L1122.8 737.4L1125.4 776.0M1172.8 739.5L1175.4 776.0M1201.5 600.0L1206.7 680.1L1207.5 718.8M1201.5 606.5L1243.7 603.8L1283.3 600.0M1243.7 603.8L1246.3 643.0L1257.5 641.3M1268.7 600.0L1267.8 608.6L1254.6 610.7L1257.5 641.3L1265.2 641.0L1266.1 661.1L1255.8 663.4L1256.6 680.1M1205.8 680.1L1268.7 680.6L1273.0 720.2M1272.1 637.5L1293.3 637.2L1292.8 678.3L1274.7 678.3L1272.1 637.5M1275.6 683.5L1324.3 684.7L1323.3 707.6L1277.8 705.0L1275.6 683.5M1393.5 688.7L1419.0 690.4L1417.6 715.4L1392.1 713.6L1393.5 688.7M1301.4 600.0L1303.1 606.0L1327.2 608.3L1328.4 600.0M1180.0 715.7L1221.3 720.5L1262.6 720.9L1355.6 722.6L1430.0 727.1M1180.0 718.8L1262.6 725.3L1359.1 728.3L1430.0 730.9M1185.2 708.5L1220.5 710.2L1221.3 720.5M1180.0 691.3L1189.5 691.3L1189.5 703.3L1180.0 703.3M1180.0 695.2L1189.5 695.2M1180.0 699.3L1189.5 699.3M1188.6 718.8L1189.5 737.7M1180.0 736.9L1240.3 738.6L1244.6 742.9L1248.9 776.0M1180.0 740.3L1238.5 742.0L1242.0 746.3L1245.4 776.0M1263.5 744.6L1266.1 742.0L1415.0 746.3L1420.2 776.0M1269.5 746.3L1411.6 749.8L1416.7 776.0M1263.5 744.6L1266.9 776.0M1269.5 746.3L1273.8 776.0M1308.3 746.3L1307.4 776.0M1307.4 767.0L1341.0 767.0L1341.0 776.0M1359.9 728.3L1360.8 745.5M1404.7 600.0L1403.0 623.2L1430.0 625.8M1186.9 708.8L1185.2 718.8M1191.5 709.0L1189.8 719.3M1196.2 709.3L1194.5 719.8M1200.8 709.5L1199.1 720.4M1205.5 709.7L1203.8 720.9M1210.1 709.9L1208.4 721.4M1214.8 710.2L1213.1 721.9M1219.4 710.4L1217.7 722.4M937.7 776.0L945.5 827.3L1033.0 816.5L1028.1 776.0M949.3 784.6L981.7 776.9M949.3 784.6L953.2 816.5L1010.9 808.7L1005.8 776.0M980.3 789.4L981.7 793.2L986.0 794.6L981.7 796.0L980.3 800.1L978.9 796.0L974.8 794.6L978.9 793.2L980.3 789.4M948.1 864.7L1036.7 854.3L1045.7 931.0L1010.9 936.1L955.8 941.3L948.1 864.7M964.1 877.6L1011.3 872.4L1017.8 919.8L969.6 924.4L964.1 877.6M975.6 882.7L980.8 882.7L980.8 886.2L985.4 886.2L985.4 891.0L980.8 891.0L980.8 896.2L975.6 896.2L975.6 891.0L970.5 891.0L970.5 886.2L975.6 886.2L975.6 882.7M997.1 879.7L1002.7 879.7L1002.7 883.6L1007.5 883.6L1007.5 888.8L1002.7 888.8L1002.7 893.9L997.1 893.9L997.1 888.8L992.3 888.8L992.3 883.6L997.1 883.6L997.1 879.7M945.8 856.9L954.1 863.8L961.0 856.9M953.2 863.8L953.2 870.7M1010.9 921.5L1025.6 936.1M1025.6 922.3L1012.6 935.3M944.1 875.9L944.6 937.8L1007.5 937.8M939.5 932.7L950.3 932.7L950.3 943.0L939.5 943.0L939.5 932.7M1084.1 776.0L1105.6 952.0M1092.7 776.0L1114.2 952.0M1120.3 776.0L1139.2 952.0M1124.6 776.0L1145.2 952.0M1124.6 779.4L1180.0 781.2M1130.6 781.2L1134.0 821.6L1180.0 821.1M1134.0 821.6L1138.3 854.3L1175.4 857.3L1180.0 856.9M1138.3 854.3L1140.1 891.4L1157.3 891.7L1180.0 893.1M1175.4 857.3L1176.2 893.1M1178.8 781.2L1180.0 808.7M1096.2 872.4L1103.9 869.0L1129.7 867.3L1138.3 869.8M1180.0 782.0L1187.2 782.5L1192.9 820.8L1196.4 857.8M1190.7 809.6L1203.8 810.4L1205.0 821.1M1180.0 821.1L1227.3 821.6L1250.6 822.5M1186.9 837.1L1192.4 833.2M1186.9 837.1L1189.5 856.9M1183.4 857.8L1219.3 860.4L1219.6 874.5L1257.5 874.1M1180.0 886.2L1183.1 858.3M1180.0 896.5L1204.1 898.6L1206.7 952.0M1181.7 913.7L1205.5 913.7M1183.1 934.4L1221.3 933.5L1263.5 931.8M1181.7 913.7L1185.2 952.0M1244.6 776.0L1260.1 886.2L1266.1 941.3L1267.8 952.0M1249.7 776.0L1265.2 883.6L1273.0 941.3L1274.7 952.0M1267.8 776.0L1272.1 808.7L1281.6 882.7L1290.2 941.3L1291.9 952.0M1273.8 776.0L1277.3 808.7L1285.9 882.7L1297.9 941.3L1299.7 952.0M1250.6 810.4L1254.9 808.4L1272.1 808.4L1277.3 810.4M1274.7 783.7L1417.6 784.3M1306.5 776.0L1306.5 783.7M1341.5 776.0L1341.5 784.3M1322.6 784.6L1327.2 839.4L1282.4 844.5M1322.9 795.8L1337.0 795.3L1337.0 802.7L1335.0 811.3L1341.0 811.3L1341.0 818.2L1335.0 818.2L1335.0 811.3M1335.0 814.7L1341.0 814.7M1341.5 784.3L1341.0 811.3M1341.0 818.2L1340.5 837.1L1355.6 835.4L1424.5 825.9M1355.6 835.4L1359.9 874.1L1370.3 873.3L1430.0 864.7M1370.3 873.3L1373.7 894.8L1363.4 896.9L1365.6 910.0M1291.9 920.3L1365.6 910.0L1430.0 900.3M1354.8 921.5L1366.0 919.3L1369.0 937.0L1375.4 937.5L1376.6 952.0M1375.4 936.5L1384.5 936.5L1386.6 952.0M1354.8 921.5L1358.2 952.0M1416.7 776.0L1427.9 832.8L1430.0 855.2M1420.2 776.0L1430.0 827.7M1294.5 920.6L1299.7 952.0" stroke="#000" stroke-width="0.95"/><path d="M1180.0 430.0L1204.1 427.4L1274.7 425.4" stroke="#444" stroke-width="0.9" stroke-dasharray="3 2"/><path d="M1143.0 406.4L1143.8 417.6M1429.3 679.2L1430.0 727.4M968.7 938.9L978.2 938.9" stroke="#000" stroke-width="2.2"/><g stroke="#000" stroke-width="0.9"><circle cx="990.3" cy="899.6" r="3.8"/></g><path d="M1073.8 527.8L1152.1 507.8L1167.3 568.3L1091.8 595.3Z" stroke="#000" stroke-width="4.2" stroke-linejoin="miter"/></g><g font-size="12.5" fill="#b3875c" stroke="#b3875c" stroke-width="0.2"><text x="994.6" y="287.6" textLength="19" lengthAdjust="spacingAndGlyphs">80.1</text><text x="928.6" y="310.3" textLength="12" lengthAdjust="spacingAndGlyphs">6.1</text><text x="970.5" y="357.3" textLength="19" lengthAdjust="spacingAndGlyphs">89.2</text><text x="976.5" y="400.4" textLength="19" lengthAdjust="spacingAndGlyphs">86,3</text><text x="981.7" y="427.1" textLength="19" lengthAdjust="spacingAndGlyphs">81,8</text><text x="1085.5" y="350.8" textLength="19" lengthAdjust="spacingAndGlyphs">83,6</text><text x="1092.7" y="371.5" textLength="19" lengthAdjust="spacingAndGlyphs">82.9</text><text x="1102.7" y="392.3" textLength="19" lengthAdjust="spacingAndGlyphs">79,2</text><text x="1098.7" y="427.1" textLength="19" lengthAdjust="spacingAndGlyphs">82.3</text><text x="1120.8" y="335.8" textLength="19" lengthAdjust="spacingAndGlyphs">76,7</text><text x="1142.6" y="387.1" textLength="19" lengthAdjust="spacingAndGlyphs">80,6</text><text x="928.3" y="385.2" textLength="5" lengthAdjust="spacingAndGlyphs">3</text><text x="1223.9" y="314.3" textLength="19" lengthAdjust="spacingAndGlyphs">87,9</text><text x="1236.0" y="370.6" textLength="19" lengthAdjust="spacingAndGlyphs">86,5</text><text x="1227.3" y="388.3" textLength="19" lengthAdjust="spacingAndGlyphs">85,3</text><text x="1192.9" y="407.3" textLength="19" lengthAdjust="spacingAndGlyphs">84.2</text><text x="1331.9" y="345.6" textLength="19" lengthAdjust="spacingAndGlyphs">90.6</text><text x="1398.7" y="366.5" textLength="19" lengthAdjust="spacingAndGlyphs">78,8</text><text x="1401.2" y="418.8" textLength="19" lengthAdjust="spacingAndGlyphs">83.8</text><text x="970.5" y="454.6" textLength="19" lengthAdjust="spacingAndGlyphs">82,0</text><text x="936.5" y="480.5" textLength="19" lengthAdjust="spacingAndGlyphs">83.4</text><text x="1097.4" y="450.7" textLength="19" lengthAdjust="spacingAndGlyphs">81.5</text><text x="1098.7" y="481.3" textLength="19" lengthAdjust="spacingAndGlyphs">83,8</text><text x="1100.5" y="508.7" textLength="19" lengthAdjust="spacingAndGlyphs">80.9</text><text x="965.3" y="581.5" textLength="19" lengthAdjust="spacingAndGlyphs">84.7</text><text x="1118.5" y="601.3" textLength="19" lengthAdjust="spacingAndGlyphs">80.4</text><text x="1155.6" y="486.8" textLength="19" lengthAdjust="spacingAndGlyphs">76.5</text><text x="1146.6" y="432.3" textLength="19" lengthAdjust="spacingAndGlyphs">80.2</text><text x="1227.3" y="438.6" textLength="19" lengthAdjust="spacingAndGlyphs">81.9</text><text x="1354.2" y="433.5" textLength="19" lengthAdjust="spacingAndGlyphs">85.7</text><text x="1275.6" y="475.7" textLength="19" lengthAdjust="spacingAndGlyphs">77.4</text><text x="1208.4" y="511.8" textLength="19" lengthAdjust="spacingAndGlyphs">85.1</text><text x="1257.5" y="560.9" textLength="19" lengthAdjust="spacingAndGlyphs">85,4</text><text x="1213.6" y="586.7" textLength="19" lengthAdjust="spacingAndGlyphs">84,6</text><text x="1331.5" y="545.9" textLength="19" lengthAdjust="spacingAndGlyphs">91.1</text><text x="1020.4" y="646.1" textLength="19" lengthAdjust="spacingAndGlyphs">74.0</text><text x="969.6" y="693.3" textLength="19" lengthAdjust="spacingAndGlyphs">74,9</text><text x="1083.2" y="720.5" textLength="19" lengthAdjust="spacingAndGlyphs">63,9</text><text x="1112.5" y="637.0" textLength="19" lengthAdjust="spacingAndGlyphs">76,4</text><text x="1133.7" y="659.4" textLength="19" lengthAdjust="spacingAndGlyphs">78,4</text><text x="1127.7" y="690.9" textLength="19" lengthAdjust="spacingAndGlyphs">76.4</text><text x="1140.9" y="701.6" textLength="19" lengthAdjust="spacingAndGlyphs">74,8</text><text x="1212.4" y="619.3" textLength="19" lengthAdjust="spacingAndGlyphs">84.0</text><text x="1232.5" y="711.9" textLength="19" lengthAdjust="spacingAndGlyphs">75,1</text><text x="1358.7" y="646.8" textLength="19" lengthAdjust="spacingAndGlyphs">78,2</text><text x="1311.7" y="748.4" textLength="19" lengthAdjust="spacingAndGlyphs">74.0</text><text x="1375.4" y="773.6" textLength="19" lengthAdjust="spacingAndGlyphs">80,8</text><text x="967.5" y="793.2" textLength="19" lengthAdjust="spacingAndGlyphs">61.3</text><text x="976.5" y="840.6" textLength="19" lengthAdjust="spacingAndGlyphs">68.6</text><text x="1054.3" y="865.5" textLength="19" lengthAdjust="spacingAndGlyphs">73,3</text><text x="992.0" y="898.6" textLength="19" lengthAdjust="spacingAndGlyphs">58,7</text><text x="1141.8" y="801.5" textLength="19" lengthAdjust="spacingAndGlyphs">77.8</text><text x="1150.7" y="838.3" textLength="19" lengthAdjust="spacingAndGlyphs">79,5</text><text x="1137.5" y="878.4" textLength="19" lengthAdjust="spacingAndGlyphs">68,5</text><text x="1106.5" y="894.8" textLength="19" lengthAdjust="spacingAndGlyphs">59,4</text><text x="1151.2" y="941.3" textLength="19" lengthAdjust="spacingAndGlyphs">70,7</text><text x="998.9" y="952.5" textLength="19" lengthAdjust="spacingAndGlyphs">69.3</text><text x="1202.4" y="799.2" textLength="19" lengthAdjust="spacingAndGlyphs">77,9</text><text x="1286.7" y="801.5" textLength="19" lengthAdjust="spacingAndGlyphs">78.3</text><text x="1368.5" y="808.4" textLength="19" lengthAdjust="spacingAndGlyphs">85,3</text><text x="1396.6" y="842.3" textLength="19" lengthAdjust="spacingAndGlyphs">79,0</text><text x="1200.7" y="857.8" textLength="19" lengthAdjust="spacingAndGlyphs">75.1</text><text x="1320.3" y="872.4" textLength="19" lengthAdjust="spacingAndGlyphs">68.2</text><text x="1392.6" y="888.3" textLength="19" lengthAdjust="spacingAndGlyphs">82.8</text><text x="1219.6" y="921.5" textLength="19" lengthAdjust="spacingAndGlyphs">74.6</text><text x="1318.6" y="930.1" textLength="19" lengthAdjust="spacingAndGlyphs">70.1</text><text x="1182.6" y="782.0" textLength="19" lengthAdjust="spacingAndGlyphs">78,7</text><text x="1272.1" y="954.2" textLength="19" lengthAdjust="spacingAndGlyphs">61.6</text></g><text transform="translate(1160.5 481.0) rotate(68)" font-family="Liberation Mono,monospace" font-size="13" letter-spacing="-2" fill="#111">Alto</text><text transform="translate(1169.0 516.5) rotate(68)" font-family="Liberation Mono,monospace" font-size="13" letter-spacing="0" fill="#111">do</text><text transform="translate(1175.5 545.5) rotate(67)" font-family="Liberation Mono,monospace" font-size="13" letter-spacing="0" fill="#111">Longo</text><text transform="translate(1279.0 396.0) rotate(82)" font-family="Liberation Mono,monospace" font-size="13" letter-spacing="-0.5" fill="#111">Pátio</text><text transform="translate(1335.0 485.0) rotate(0)" font-family="Liberation Mono,monospace" font-size="13.5" letter-spacing="0" fill="#111">do</text><text transform="translate(1406.0 436.5) rotate(-81)" font-family="Liberation Mono,monospace" font-size="12" letter-spacing="-0.8" fill="#111">Tijolo</text><text transform="translate(1279.5 926.0) rotate(-84)" font-family="Liberation Mono,monospace" font-size="13" letter-spacing="-0.3" fill="#111">Soure</text><text transform="translate(1356.5 739.5) rotate(0)" font-family="Liberation Mono,monospace" font-size="14" letter-spacing="0" fill="#111">Tv.</text><text transform="translate(1394.4 741.0) rotate(0)" font-family="Liberation Mono,monospace" font-size="14" letter-spacing="0.6" fill="#111">Conc</text></svg>
<span class="t" style="left:933.6px;top:254px;font-size:15px;color:#3a3a3a;letter-spacing:0.158px;">[+][Top][2D Wireframe]</span>
<svg style="left:928px;top:246px;position:absolute" width="504" height="709" viewBox="928 246 504 709"><circle cx="1371" cy="306" r="37" fill="none" stroke="#f0f0f0" stroke-opacity="0.45" stroke-width="10"/><rect x="1353.5" y="288.500" width="35.500" height="35.500" fill="#efefef" stroke="#8e8e8e" stroke-width="1"/><rect x="1360" y="295" width="22" height="22" fill="#e0e4e8"/><text x="1363.700" y="310" font-size="11" font-weight="bold" fill="#8c9098" textLength="15" lengthAdjust="spacingAndGlyphs">TOP</text><g font-size="15.500" font-weight="bold" fill="#dcdcdc" stroke="#bcbcbc" stroke-width="0.400"><text x="1366" y="272.700" textLength="10" lengthAdjust="spacingAndGlyphs">N</text><text x="1366.500" y="352" textLength="9.500" lengthAdjust="spacingAndGlyphs">S</text><text x="1324.400" y="311.400" textLength="14.300" lengthAdjust="spacingAndGlyphs">W</text><text x="1405.800" y="311.400" textLength="9.200" lengthAdjust="spacingAndGlyphs">E</text></g><rect x="1342.600" y="368.300" width="54" height="18.300" rx="4" fill="#e4e6f2" opacity="0.920"/><text x="1348" y="382.300" font-size="12" fill="#a4a8b0" textLength="28" lengthAdjust="spacingAndGlyphs">WCS</text><path d="M1381.500 373.500h10.500l-5.200 7.500z" fill="none" stroke="#b4b8c4" stroke-width="1"/><rect x="1385.500" y="417" width="41.500" height="260.500" rx="5" fill="#bdbdbd" fill-opacity="0.340" stroke="#c8c8c8" stroke-width="1.600"/><g fill="none" stroke="#d2d2d2" stroke-width="1.500"><circle cx="1405" cy="452" r="10.500"/><rect x="1399.500" y="446.500" width="11" height="11"/><path d="M1391 486h28M1391 618h28"/><path d="M1398 525v-14c0-3 4-3 4 0v-4c0-3 4-3 4 0v2c0-3 4-3 4 0v3c0-3 4-3 4 0v14c0 6-3 9-8 9s-8-4-11-10c-1-3 2-4 3-2z"/><circle cx="1414" cy="582" r="5"/><path d="M1418 586l6 6M1393 568l6 6M1405 568l-6 6M1393 588l6-6"/><path d="M1405 603l-7 7h4v6h6v-6h4zM1394 628a12 5 0 1 0 24 0" /><rect x="1391.500" y="625.500" width="7" height="7"/><rect x="1401.500" y="625.500" width="7" height="7"/><rect x="1411.500" y="625.500" width="7" height="7"/><rect x="1391.500" y="637" width="21" height="17"/><circle cx="1418" cy="668" r="3.500"/></g><path d="M1398 640.500l9 5l-9 5z" fill="#cdcdcd"/></svg>
<svg style="left:1836px;top:234px;" width="70" height="18" viewBox="0 0 70 18"><rect x="2.500" y="10" width="14" height="5" fill="#f2f2f2" stroke="#3a3d46" stroke-width="1.300"/><rect x="30.500" y="2.500" width="10.500" height="10.500" fill="#f4f4f4" stroke="#3a3d46" stroke-width="1.300"/><rect x="27.500" y="5.500" width="10.500" height="10.500" fill="#f4f4f4" stroke="#3a3d46" stroke-width="1.300"/><rect x="30.800" y="8.800" width="4" height="4" fill="#6a6a6a" stroke="#3a3d46" stroke-width="1"/><path d="M54.500 5.500l9.500 8.500M64 5.500l-9.500 8.500" stroke="#3a3d46" stroke-width="5.400" stroke-linecap="butt"/><path d="M54.500 5.500l9.500 8.500M64 5.500l-9.500 8.500" stroke="#f6f6f6" stroke-width="3" stroke-linecap="butt"/></svg>
<div style="left:742px;top:941px;width:73px;height:34px;background:#454d5b;border-radius:4px 0 0 4px"></div>
<div style="left:814px;top:942px;width:803px;height:32px;background:rgba(255,255,255,0.680);border-radius:4px;box-sizing:border-box;border-top:1px solid #555a62"></div>
<svg style="left:742px;top:941px;" width="110" height="34" viewBox="0 0 110 34"><rect x="5" y="6.0" width="1.600" height="1.800" fill="#e4e4e4"/><rect x="5" y="9.5" width="1.600" height="1.800" fill="#e4e4e4"/><rect x="5" y="13.0" width="1.600" height="1.800" fill="#e4e4e4"/><rect x="5" y="16.5" width="1.600" height="1.800" fill="#e4e4e4"/><rect x="5" y="20.0" width="1.600" height="1.800" fill="#e4e4e4"/><rect x="5" y="23.5" width="1.600" height="1.800" fill="#e4e4e4"/><rect x="5" y="27.0" width="1.600" height="1.800" fill="#e4e4e4"/><rect x="8" y="6.0" width="1.600" height="1.800" fill="#e4e4e4"/><rect x="8" y="9.5" width="1.600" height="1.800" fill="#e4e4e4"/><rect x="8" y="13.0" width="1.600" height="1.800" fill="#e4e4e4"/><rect x="8" y="16.5" width="1.600" height="1.800" fill="#e4e4e4"/><rect x="8" y="20.0" width="1.600" height="1.800" fill="#e4e4e4"/><rect x="8" y="23.5" width="1.600" height="1.800" fill="#e4e4e4"/><rect x="8" y="27.0" width="1.600" height="1.800" fill="#e4e4e4"/><path d="M20 10.500l10 10M30 10.500l-10 10" stroke="#e6e6e6" stroke-width="2.200"/><path d="M48.500 24.500l10-10" stroke="#c8c8c8" stroke-width="3.400" stroke-linecap="round"/><path d="M57 7.500a5 5 0 1 0 7.500 6l-3.500 1l-2.500-2.500l1-3.500a5 5 0 0 0-2.500-1z" fill="#c8c8c8"/><rect x="77.500" y="9.500" width="19" height="14.500" fill="none" stroke="#7a7a7a" stroke-width="1.200"/><rect x="77.500" y="9.500" width="19" height="3.500" fill="#7a7a7a"/><path d="M80.500 16l3 2l-3 2M85 21h4" stroke="#7a7a7a" fill="none" stroke-width="1"/><path d="M99.500 15.500h9l-4.500 5z" fill="#7a7a7a"/></svg>
<span class="t" style="left:860.5px;top:951px;font-size:15px;color:#777;letter-spacing:-0.143px;font-style:italic;font-family:'Liberation Mono',monospace;">Type a command</span>
<svg style="left:1600px;top:954px;" width="10" height="6" viewBox="0 0 10 6"><path d="M0 6H10L5 0Z" fill="#666"/></svg>
<svg style="left:0px;top:980px;" width="420" height="40" viewBox="0 0 420 40"><path d="M228 0H346L334.500 29.600H214.500Z" fill="#3b4453"/><path d="M19.700 23.700L26.800 8M93 23.700L100 8M385.700 23.700L393.500 8" stroke="#4c5666" stroke-width="1.200"/><path d="M364.500 8V22.500M357 15.200H372" stroke="#f0f0f0" stroke-width="2.200"/></svg>
<span class="t" style="left:38.2px;top:987px;font-size:15px;color:#e8e8e8;letter-spacing:0.328px;">Model</span>
<span class="t" style="left:112.2px;top:987px;font-size:15px;color:#e8e8e8;letter-spacing:-0.463px;">escala_1-1000</span>
<span class="t" style="left:235.0px;top:987px;font-size:15px;color:#fff;letter-spacing:-0.242px;font-weight:bold;">escala_1-100</span>
<div style="left:1070px;top:982px;width:59px;height:30px;background:#3b4453;"></div>
<div style="left:1132px;top:982px;width:80px;height:30px;background:#3b4453;"></div>
<div style="left:1215px;top:982px;width:30px;height:30px;background:#3b4453;"></div>
<div style="left:1246px;top:982px;width:211px;height:30px;background:#3b4453;"></div>
<div style="left:1460px;top:982px;width:263px;height:30px;background:#3b4453;"></div>
<div style="left:1727px;top:982px;width:50px;height:30px;background:#3b4453;"></div>
<div style="left:1778px;top:982px;width:30px;height:30px;background:#3b4453;"></div>
<div style="left:1811px;top:982px;width:31px;height:30px;background:#3b4453;"></div>
<div style="left:1845px;top:982px;width:4px;height:30px;background:#3b4453;"></div>
<div style="left:1852px;top:982px;width:60px;height:30px;background:#3b4453;"></div>
<div style="left:1277px;top:983px;width:28px;height:28px;background:#5c8fc8;"></div>
<div style="left:1378px;top:983px;width:28px;height:28px;background:#5c8fc8;"></div>
<div style="left:1408px;top:983px;width:28px;height:28px;background:#5c8fc8;"></div>
<div style="left:1695px;top:983px;width:28px;height:28px;background:#5c8fc8;"></div>
<div style="left:1376px;top:982px;width:1px;height:30px;background:#2a313d;"></div>
<span class="t" style="left:1074.5px;top:989px;font-size:15px;color:#f4f4f4;letter-spacing:-0.589px;">MODEL</span>
<span class="t" style="left:1616.0px;top:989px;font-size:15px;color:#f4f4f4;letter-spacing:-0.647px;">0.009132</span>
<svg style="left:1196.8px;top:994px;" width="10" height="5.5" viewBox="0 0 10 5.5"><path d="M0 0H10L5.0 5.5Z" fill="#dcdcdc"/></svg>
<svg style="left:1311.0px;top:994px;" width="10" height="5.5" viewBox="0 0 10 5.5"><path d="M0 0H10L5.0 5.5Z" fill="#dcdcdc"/></svg>
<svg style="left:1360.7px;top:994px;" width="10" height="5.5" viewBox="0 0 10 5.5"><path d="M0 0H10L5.0 5.5Z" fill="#dcdcdc"/></svg>
<svg style="left:1442.0px;top:994px;" width="10" height="5.5" viewBox="0 0 10 5.5"><path d="M0 0H10L5.0 5.5Z" fill="#dcdcdc"/></svg>
<svg style="left:1679.3px;top:994px;" width="10" height="5.5" viewBox="0 0 10 5.5"><path d="M0 0H10L5.0 5.5Z" fill="#dcdcdc"/></svg>
<svg style="left:1762.0px;top:994px;" width="10" height="5.5" viewBox="0 0 10 5.5"><path d="M0 0H10L5.0 5.5Z" fill="#dcdcdc"/></svg>
<svg style="left:1060px;top:980px;position:absolute" width="856" height="36" viewBox="1060 980 856 36"><path d="M1141 987v19M1146.500 987v19M1152 987v19M1137 991h19M1137 996.500h19M1137 1002h19" stroke="#e6e6e6" stroke-width="1.200"/><rect x="1169.0" y="989.5" width="3" height="3" fill="#e6e6e6"/><rect x="1169.0" y="995.7" width="3" height="3" fill="#e6e6e6"/><rect x="1169.0" y="1001.9" width="3" height="3" fill="#e6e6e6"/><rect x="1175.2" y="989.5" width="3" height="3" fill="#e6e6e6"/><rect x="1175.2" y="995.7" width="3" height="3" fill="#e6e6e6"/><rect x="1175.2" y="1001.9" width="3" height="3" fill="#e6e6e6"/><rect x="1181.4" y="989.5" width="3" height="3" fill="#e6e6e6"/><rect x="1181.4" y="995.7" width="3" height="3" fill="#e6e6e6"/><rect x="1181.4" y="1001.9" width="3" height="3" fill="#e6e6e6"/><path d="M1224 989v10M1219 994h10" stroke="#e6e6e6" stroke-width="1.300"/><rect x="1226.500" y="999.500" width="13" height="5" fill="#e6e6e6"/><rect x="1227.500" y="1000.500" width="2.500" height="3" fill="#3b4453"/><path d="M1251.500 987.500v19h19.500M1251.500 1000.500h6v6" fill="none" stroke="#e6e6e6" stroke-width="1.300"/><circle cx="1290" cy="997" r="8.300" fill="none" stroke="#e6e6e6" stroke-width="1.300"/><path d="M1288 997.500h12.500M1288 997.500l9-9.500" stroke="#e6e6e6" stroke-width="1.300"/><path d="M1341 987v18" stroke="#4cd06a" stroke-width="1.300"/><path d="M1333 988.500l15 15" stroke="#d0505a" stroke-width="1.300"/><rect x="1339.300" y="994.300" width="3.400" height="3.400" fill="#3b4453" stroke="#e6e6e6" stroke-width="0.900"/><path d="M1382.500 1004h19.500M1383 1003.500l14-15" stroke="#e6e6e6" stroke-width="1.500"/><rect x="1387.800" y="995" width="3.600" height="3.600" fill="#e6e6e6"/><rect x="1414.500" y="989.500" width="17" height="16.500" fill="none" stroke="#e6e6e6" stroke-width="1.400"/><rect x="1412.500" y="987.500" width="5" height="5" fill="#5c8fc8" stroke="#e6e6e6" stroke-width="1"/><rect x="1465.500" y="988" width="19" height="18.500" fill="none" stroke="#e6e6e6" stroke-width="1.200" stroke-dasharray="4 2"/><rect x="1473.500" y="996" width="8" height="8" fill="none" stroke="#e6e6e6" stroke-width="1.200"/><path d="M1466 988.500l7 7M1466 988.500v4.500M1466 988.500h4.500" stroke="#e6e6e6" stroke-width="1.200"/><path d="M1502.5 988l3.500 12l5 6.500l-8.500-4.500l-8.500 4.500l5-6.500z" fill="#d8d8d8"/><circle cx="1511.500" cy="991.500" r="3" fill="none" stroke="#e6e6e6" stroke-width="1.100"/><path d="M1532.5 988l3.500 12l5 6.500l-8.500-4.500l-8.500 4.500l5-6.500z" fill="#d8d8d8"/><path d="M1541 987l-4 6h3l-2.500 5l5.500-7h-3l2-4z" fill="#e6e6e6"/><rect x="1557" y="996.500" width="15.500" height="10" fill="none" stroke="#c4c4c4" stroke-width="1.400"/><path d="M1560 996.500v-3.500a4.800 4.800 0 0 1 9.600 0v3.500" fill="none" stroke="#c4c4c4" stroke-width="1.400"/><path d="M1564.800 999.500v4.500" stroke="#c4c4c4" stroke-width="1.400"/><g fill="none" stroke="#b4b4b4" stroke-width="1.300"><path d="M1586.500 992.500v-3.500h3.500M1599.500 989h3.500v3.500M1603 1000.500v3.500h-3.500M1590 1004h-3.500v-3.500"/><rect x="1588.500" y="996" width="8" height="7"/></g><g fill="none" stroke="#e6e6e6" stroke-width="1.300"><path d="M1699.500 992v-4h4M1714 988h4v4M1699.500 1000v4h4"/><rect x="1700.500" y="989" width="16.500" height="13.500" stroke="#cfe0f4" stroke-width="1"/></g><path d="M1714 993l3 9l4 5l-7-3.500l-7 3.500l4-5z" fill="#f4f4f4"/><rect x="1740.0" y="986.8" width="4.400" height="5" fill="#dcdcdc" transform="rotate(0 1742.2 997)"/><rect x="1740.0" y="986.8" width="4.400" height="5" fill="#dcdcdc" transform="rotate(45 1742.2 997)"/><rect x="1740.0" y="986.8" width="4.400" height="5" fill="#dcdcdc" transform="rotate(90 1742.2 997)"/><rect x="1740.0" y="986.8" width="4.400" height="5" fill="#dcdcdc" transform="rotate(135 1742.2 997)"/><rect x="1740.0" y="986.8" width="4.400" height="5" fill="#dcdcdc" transform="rotate(180 1742.2 997)"/><rect x="1740.0" y="986.8" width="4.400" height="5" fill="#dcdcdc" transform="rotate(225 1742.2 997)"/><rect x="1740.0" y="986.8" width="4.400" height="5" fill="#dcdcdc" transform="rotate(270 1742.2 997)"/><rect x="1740.0" y="986.8" width="4.400" height="5" fill="#dcdcdc" transform="rotate(315 1742.2 997)"/><circle cx="1742.2" cy="997" r="5.600" fill="none" stroke="#dcdcdc" stroke-width="4.200"/><path d="M1792.500 987.500v19M1783 997h19" stroke="#f0f0f0" stroke-width="2.200"/><g fill="none" stroke="#e6e6e6" stroke-width="1.200"><rect x="1816.500" y="987.500" width="7.500" height="7.500"/><circle cx="1832" cy="995.500" r="4"/><path d="M1824.500 999l4.500 7.500h-9z"/></g><rect x="1857.500" y="989.500" width="19.500" height="14" fill="none" stroke="#e6e6e6" stroke-width="1.200"/><path d="M1875 991.500l-4.500 4.500M1875 991.500h-4M1875 991.500v4M1859.500 1001.500l4.500-4.500M1859.500 1001.500h4M1859.500 1001.500v-4" stroke="#e6e6e6" stroke-width="1.300" fill="none"/><path d="M1887 989.500h20M1887 997h20M1887 1004.500h20" stroke="#f0f0f0" stroke-width="2.200"/></svg>
</body></html>
